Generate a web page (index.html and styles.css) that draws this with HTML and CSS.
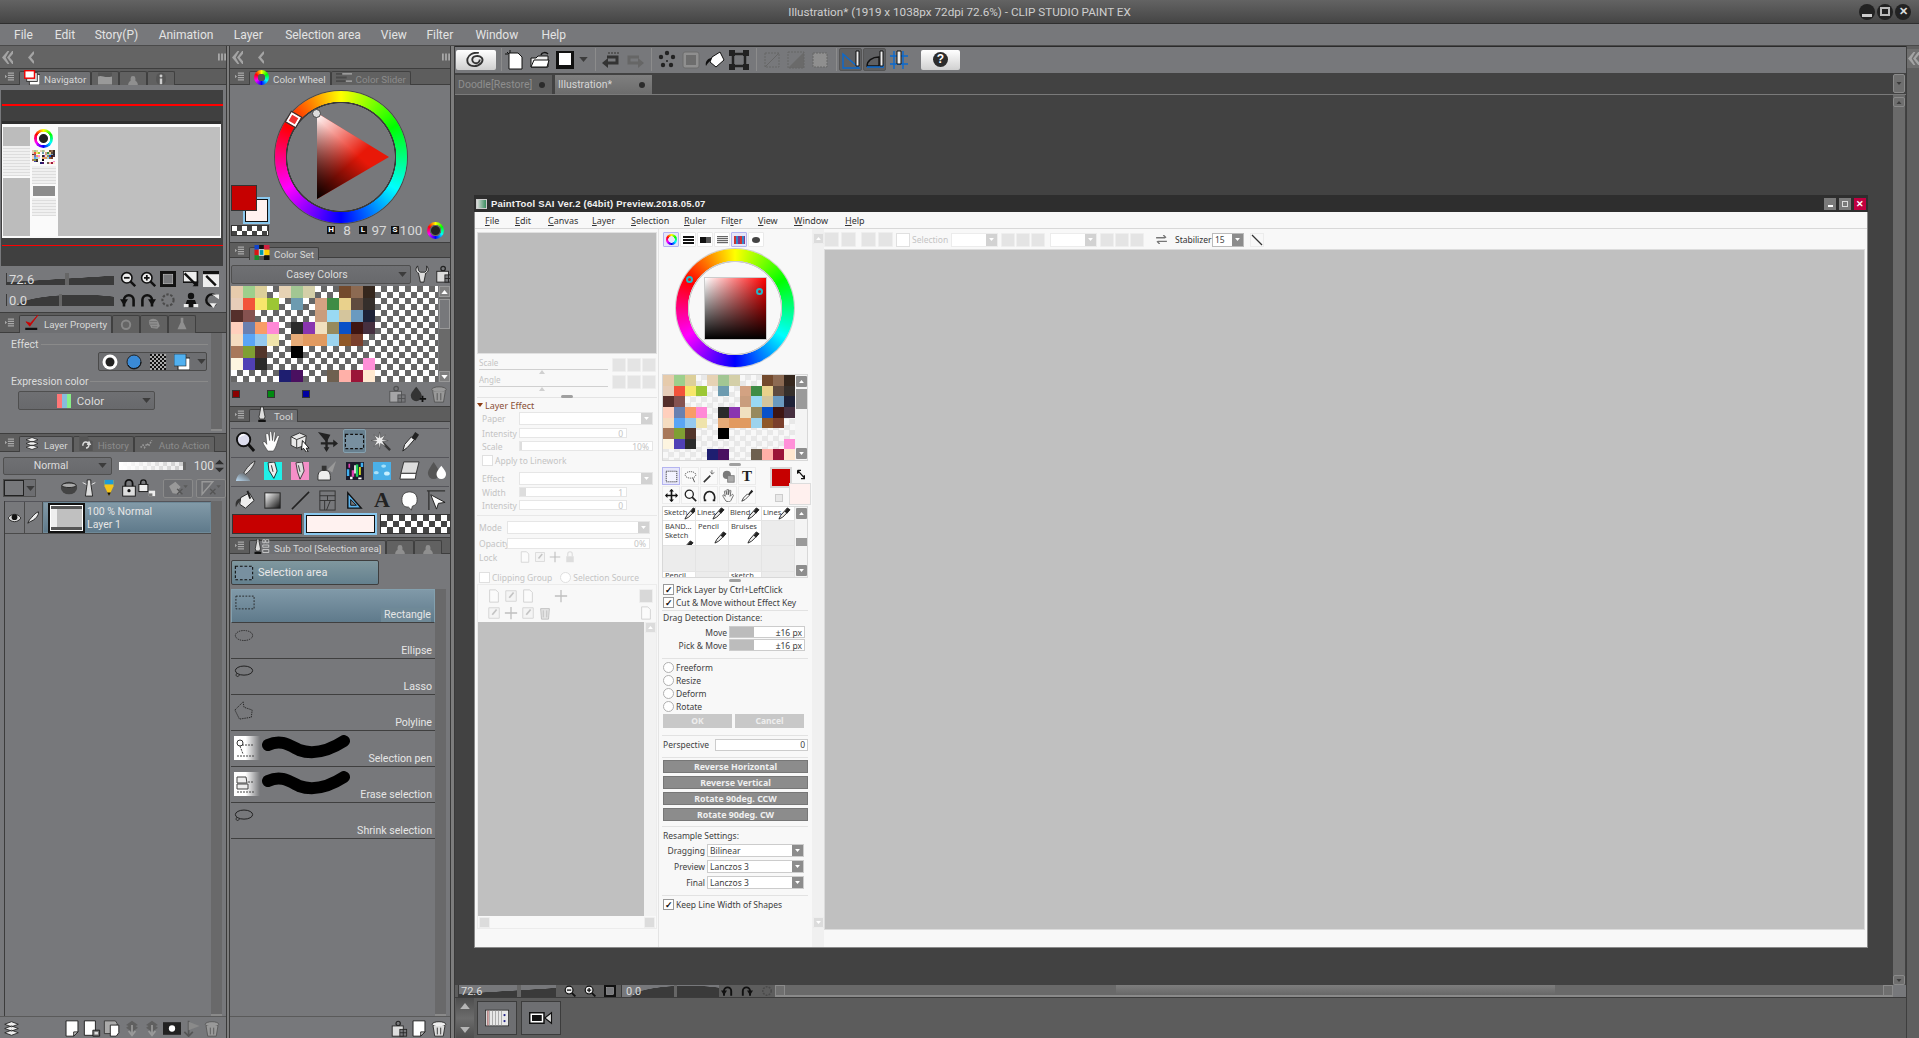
FILE: index.html
```html
<!DOCTYPE html>
<html lang="en">
<head>
<meta charset="utf-8">
<title>Illustration - CLIP STUDIO PAINT EX</title>
<link rel="stylesheet" href="styles.css">
</head>
<body>
<svg class="sprite" aria-hidden="true">
  <defs>
    <linearGradient id="triW" x1="0" y1="0" x2="0.45" y2="0.6"><stop offset="0" stop-color="#fff"/><stop offset="1" stop-color="#fff" stop-opacity="0"/></linearGradient>
    <linearGradient id="triK" x1="0" y1="1" x2="0.45" y2="0.4"><stop offset="0" stop-color="#000"/><stop offset="1" stop-color="#000" stop-opacity="0"/></linearGradient>
    <linearGradient id="fade" x1="0" y1="0" x2="1" y2="0"><stop offset="0.45" stop-color="#fff"/><stop offset="1" stop-color="#fff" stop-opacity="0"/></linearGradient>
    <linearGradient id="sq" x1="0" y1="0" x2="1" y2="1"><stop offset="0" stop-color="#fff"/><stop offset="1" stop-color="#111"/></linearGradient>
    <linearGradient id="brushg" x1="0" y1="1" x2="1" y2="0"><stop offset="0" stop-color="#bcdcf5"/><stop offset="1" stop-color="#555"/></linearGradient>
  </defs>
  <symbol id="menu" viewBox="0 0 11 10"><path fill="#a8a8a8" d="M0 3l2.500 2L0 7zM3.500 0H11v1.600H3.500zM3.500 2.800H11v1.600H3.500zM3.500 5.600H11v1.600H3.500zM3.500 8.400H11V10H3.500z"/></symbol>
  <symbol id="chev2" viewBox="0 0 12 14"><path fill="#a4a4a4" d="M6 0 0 7l6 7h2L4 7l4-7zM11 0 5.500 7l5.500 7h1V11L8.500 7 12 3V0z"/></symbol>
  <symbol id="chev1" viewBox="0 0 7 14"><path fill="#a4a4a4" d="M6 0 0 7l6 7h1V11L3.500 7 7 3V0z"/></symbol>
  <symbol id="grip" viewBox="0 0 9 8"><path fill="#a8a8a8" d="M0 0h2v8H0zM3.500 0h2v8h-2zM7 0h2v8H7z"/></symbol>
  <symbol id="magm" viewBox="0 0 20 20"><circle cx="8.500" cy="8.500" r="6.500" fill="#eee" stroke="#111" stroke-width="2"/><path d="M13 13l6 6" stroke="#111" stroke-width="3"/><path d="M5 8.500h7" stroke="#111" stroke-width="2.200"/></symbol>
  <symbol id="magp" viewBox="0 0 20 20"><circle cx="8.500" cy="8.500" r="6.500" fill="#eee" stroke="#111" stroke-width="2"/><path d="M13 13l6 6" stroke="#111" stroke-width="3"/><path d="M5 8.500h7M8.500 5v7" stroke="#111" stroke-width="2.200"/></symbol>
  <symbol id="fit" viewBox="0 0 20 20"><rect width="20" height="20" fill="#111"/><rect x="4" y="4" width="12" height="12" fill="#77787b" stroke="#ddd" stroke-width=".6"/></symbol>
  <symbol id="flip1" viewBox="0 0 20 20"><rect width="18" height="14" fill="#eee" stroke="#111" stroke-width="2"/><path d="M2 3l15 15" stroke="#111" stroke-width="3"/><path d="M12 19h7v-7z" fill="#111"/></symbol>
  <symbol id="flip2" viewBox="0 0 20 20"><rect y="2" width="20" height="18" fill="#eee"/><rect width="20" height="4" fill="#111"/><path d="M4 6l12 12" stroke="#111" stroke-width="3"/></symbol>
  <symbol id="rotl" viewBox="0 0 20 20"><path d="M5 18V10a6 6 0 0 1 12 0v8" fill="none" stroke="#111" stroke-width="3.200"/><path d="M0 9h10L5 17z" fill="#111"/></symbol>
  <symbol id="rotr" viewBox="0 0 20 20"><path d="M3 18V10a6 6 0 0 1 12 0v8" fill="none" stroke="#111" stroke-width="3.200"/><path d="M10 9h10l-5 8z" fill="#111"/></symbol>
  <symbol id="gear" viewBox="0 0 20 20"><circle cx="10" cy="10" r="7" fill="none" stroke="#4a4a4a" stroke-width="2.600" stroke-dasharray="3 2"/></symbol>
  <symbol id="person" viewBox="0 0 20 20"><circle cx="10" cy="5" r="4" fill="#111"/><path d="M5 10h10l3 9H2z" fill="#111"/><path d="M1 15h6v4H1zM13 15h6v4h-6z" fill="#eee"/></symbol>
  <symbol id="rot3" viewBox="0 0 20 20"><path d="M16 5A7 7 0 1 0 16 15" fill="none" stroke="#111" stroke-width="3"/><path d="M11 3h9v6zM8 14h9l-4 6z" fill="#eee"/></symbol>
  <symbol id="check" viewBox="0 0 20 20"><path d="M1 17h16v3H1z" fill="#111"/><path d="M2 9l5 6L18 0 8 11z" fill="#c00" stroke="#c00"/></symbol>
  <symbol id="dial" viewBox="0 0 20 20"><circle cx="10" cy="12" r="8" fill="#888"/><circle cx="10" cy="12" r="5" fill="#666"/></symbol>
  <symbol id="cloth" viewBox="0 0 20 20"><path d="M2 6c4-5 10-4 14 0l3 8-4 4-9-1-3-6z" fill="#8f8f8f"/><path d="M3 7h12M4 11h11M7 15h8" stroke="#666"/></symbol>
  <symbol id="flask" viewBox="0 0 20 20"><path d="M8 1h4v7l5 11H3l5-11z" fill="#8f8f8f"/></symbol>
  <symbol id="layers" viewBox="0 0 20 20"><path d="M2 5l8-3 8 3-8 3zM2 10l8-3 8 3-8 3zM2 15l8-3 8 3-8 3z" fill="#eee" stroke="#222" stroke-width="1"/></symbol>
  <symbol id="history" viewBox="0 0 20 20"><path d="M1 0h11l2 5 5 2v13H1z" fill="#555"/><path d="M6 13a4 4 0 1 1 4 3" fill="none" stroke="#ddd" stroke-width="2"/><path d="M14 6l3 6h-6z" fill="#ddd"/></symbol>
  <symbol id="autoa" viewBox="0 0 20 14"><path d="M2 12l3-3 2 3 3-5 2 3 4-7" fill="none" stroke="#999" stroke-width="2" stroke-dasharray="2 1.500"/></symbol>
  <symbol id="img" viewBox="0 0 14 12"><rect width="14" height="12" fill="#555"/><path d="M0 4c4-2 6 2 14 0v8H0z" fill="#999"/></symbol>
  <symbol id="tube" viewBox="0 0 14 16"><path d="M1 16a6 6 0 0 1 12 0zM4 8a3 3 0 0 1 6 0v3H4z" fill="#8f8f8f"/></symbol>
  <symbol id="info" viewBox="0 0 14 16"><rect x="1" y="1" width="12" height="15" rx="6" fill="#555"/><circle cx="7" cy="5" r="1.800" fill="#ccc"/><path d="M5.500 8h3v7h-3z" fill="#ccc"/></symbol>
  <symbol id="navi" viewBox="0 0 18 17"><rect x="6" y="5" width="12" height="12" fill="#fff" stroke="#333"/><rect x="3" y="3" width="12" height="10" fill="#ddd" stroke="#333"/><rect x=".8" y=".8" width="11" height="8.500" fill="#fff" stroke="#e00" stroke-width="1.600"/></symbol>
  <symbol id="cset" viewBox="0 0 16 16"><path fill="#1144cc" d="M0 0h5v5H0z"/><path fill="#111" d="M5 0h5v5H5z"/><path fill="#d02040" d="M10 0h6v5h-6z"/><path fill="#d81515" d="M0 5h5v6H0z"/><path fill="#09a" d="M5 5h5v6H5z"/><path fill="#ffd000" d="M10 5h6v6h-6z"/><path fill="#1a8a2a" d="M0 11h5v5H0z"/><path fill="#555" d="M5 11h5v5H5z"/><path fill="#111" d="M10 11h6v5h-6z"/><rect x="5" y="5" width="5" height="6" fill="none" stroke="#fff" stroke-width=".8"/></symbol>
  <symbol id="slid" viewBox="0 0 18 12"><path fill="#4a4a4a" d="M0 1h18v2H0zM0 5h12v2H0zM0 9h18v2H0z"/><path fill="#9a9a9a" d="M7 1h11v2H7zM11 9h7v2h-7z"/></symbol>
  <symbol id="penstand" viewBox="0 0 12 20"><path d="M4 0h4v3l2 10-1 3H3l-1-3 2-10z" fill="#ddd" stroke="#222"/><path d="M1 17h10v3H1z" fill="#111"/></symbol>
  <symbol id="subt" viewBox="0 0 20 20"><path d="M3 0h3v3l2 10-1 3H2l-1-3 2-10z" fill="#ddd" stroke="#222"/><path d="M0 17h9v3H0z" fill="#111"/><path d="M11 1h3v4h-3zM15 1h4v4h-4zM11 8h8v3h-8zM11 14h8v4h-8z" fill="none" stroke="#ddd"/></symbol>
  <symbol id="wrench" viewBox="0 0 20 20"><path d="M4 1c-3 3-2 7 1 8l2 10h4l2-10c3-1 4-5 1-8v5l-2 2H7L5 6z" fill="#ddd" stroke="#222"/></symbol>
  <symbol id="bag" viewBox="0 0 20 20"><circle cx="9" cy="4" r="2.500" fill="none" stroke="#222" stroke-width="1.400"/><rect x="2" y="7" width="13" height="12" fill="#ddd" stroke="#222"/><rect x="11" y="11" width="8" height="8" fill="#77787b" stroke="#222"/><path d="M11 15h8M15 11v8" stroke="#222"/></symbol>
  <symbol id="dropplus" viewBox="0 0 20 20"><path d="M8 2c5 6 6 8 6 10a6 6 0 1 1-12 0c0-2 1-4 6-10z" fill="#333"/><path d="M15 12v7M12 15.500h7" stroke="#111" stroke-width="2"/></symbol>
  <symbol id="trash" viewBox="0 0 20 20"><ellipse cx="10" cy="5" rx="8" ry="3" fill="#eee" stroke="#222"/><path d="M3 7l2 12h10l2-12" fill="#ddd" stroke="#222"/><path d="M8 9v8M12 9v8" stroke="#222"/></symbol>
  <symbol id="trashd" viewBox="0 0 20 20"><ellipse cx="10" cy="5" rx="8" ry="3" fill="#999" stroke="#555"/><path d="M3 7l2 12h10l2-12" fill="#999" stroke="#555"/><path d="M8 9v8M12 9v8" stroke="#555"/></symbol>
  <symbol id="page" viewBox="0 0 18 20"><path d="M2 1h14v13l-5 5H2z" fill="#fff" stroke="#111"/><path d="M11 19v-5h5z" fill="#ccc" stroke="#111"/></symbol>
  <symbol id="pagecopy" viewBox="0 0 20 20"><path d="M1 1h13v17H1z" fill="#fff" stroke="#111"/><path d="M11 12h8v7h-8z" fill="#777" stroke="#111"/><path d="M13 14h4v3h-4z" fill="#ddd"/></symbol>
  <symbol id="pagefold" viewBox="0 0 20 20"><path d="M1 1h13l2 3v12H1z" fill="#aaa" stroke="#333"/><path d="M8 6h10v9l-3 4H8z" fill="#fff" stroke="#111"/></symbol>
  <symbol id="merge" viewBox="0 0 20 20"><path d="M10 1l7 5-3 1 3 2-7 5-7-5 3-2-3-1z" fill="#5f5f5f"/><path d="M10 6v10M6 13l4 5 4-5" stroke="#9a9a9a" stroke-width="2" fill="none"/></symbol>
  <symbol id="maskb" viewBox="0 0 20 14"><rect width="20" height="14" fill="#222"/><circle cx="10" cy="7" r="3.500" fill="#fff"/></symbol>
  <symbol id="flag" viewBox="0 0 20 20"><path d="M6 1v18M1 14l5 5 5-5" stroke="#555" stroke-width="2" fill="none"/><path d="M6 2l13 5-13 5z" fill="#8a8a8a"/></symbol>
  <symbol id="eye" viewBox="0 0 16 12"><path d="M0 6c4-6 12-6 16 0-4 6-12 6-16 0z" fill="#ddd" stroke="#111"/><circle cx="8" cy="5" r="3.500" fill="#111"/></symbol>
  <symbol id="pen" viewBox="0 0 16 16"><path d="M14 1c1 4-4 10-10 12L1 15l2-4C6 8 10 2 14 1z" fill="#eee" stroke="#111"/></symbol>
  <symbol id="clip" viewBox="0 0 20 16"><ellipse cx="10" cy="8" rx="9" ry="7" fill="#444"/><ellipse cx="10" cy="5" rx="8" ry="2.500" fill="#aaa" stroke="#222"/></symbol>
  <symbol id="lhouse" viewBox="0 0 14 20"><path d="M5 1h4v4l2 14H3L5 5z" fill="#ddd" stroke="#222"/><path d="M0 4l4 2M14 4l-4 2" stroke="#eee"/></symbol>
  <symbol id="pencolor" viewBox="0 0 12 20"><path d="M1 1h10v7L6 19 1 8z" fill="#f5c518"/><path d="M1 1h10v5H1z" fill="#1e9ad6"/><path d="M4 15l2 4 2-4z" fill="#111"/></symbol>
  <symbol id="lock" viewBox="0 0 16 20"><path d="M4 9V5a4 4 0 0 1 8 0v4" fill="none" stroke="#111" stroke-width="2"/><rect x="1" y="8" width="14" height="11" fill="#ddd" stroke="#111"/><circle cx="8" cy="13" r="1.800" fill="#111"/></symbol>
  <symbol id="locka" viewBox="0 0 20 20"><path d="M3 6V4a3 3 0 0 1 6 0v2" fill="none" stroke="#111" stroke-width="1.500"/><rect x="1" y="6" width="10" height="8" fill="#eee" stroke="#111"/><path d="M12 13h7v6h-7z" fill="#eee"/><path d="M12 16h4v3h-4z" fill="#777"/></symbol>
  <symbol id="pickx" viewBox="0 0 24 18"><path d="M2 7l7-5 6 6-3 3 2 5-8-1z" fill="#999"/><path d="M11 10l6 6M17 10l-6 6" stroke="#555" stroke-width="1.500"/><path d="M18 6h5l-2.500 3z" fill="#5a5a5a"/></symbol>
  <symbol id="lnx" viewBox="0 0 24 18"><path d="M2 2h12L2 16z" fill="none" stroke="#999" stroke-width="1.600"/><path d="M2 16L14 2" stroke="#999"/><path d="M11 10l6 6M17 10l-6 6" stroke="#555" stroke-width="1.500"/><path d="M18 6h5l-2.500 3z" fill="#5a5a5a"/></symbol>
  <symbol id="dotring" viewBox="0 0 16 16"><circle cx="8" cy="8" r="7.500" fill="#fff"/><circle cx="8" cy="8" r="4.500" fill="#222"/></symbol>
  <symbol id="bluec" viewBox="0 0 16 16"><circle cx="8" cy="8" r="7" fill="#3a8ad6" stroke="#222"/><path d="M2 11a7 7 0 0 0 13-3" stroke="#111" fill="none"/></symbol>
  <symbol id="noisec" viewBox="0 0 16 16"><rect width="16" height="16" fill="#aaa"/><path d="M0 0h2v2H0zM4 0h2v2H4zM8 0h2v2H8zM12 0h2v2h-2zM2 2h2v2H2zM6 2h2v2H6zM10 2h2v2h-2zM14 2h2v2h-2zM0 4h2v2H0zM4 4h2v2H4zM8 4h2v2H8zM12 4h2v2h-2zM2 6h2v2H2zM6 6h2v2H6zM10 6h2v2h-2zM14 6h2v2h-2zM0 8h2v2H0zM4 8h2v2H4zM8 8h2v2H8zM12 8h2v2h-2zM2 10h2v2H2zM6 10h2v2H6zM10 10h2v2h-2zM14 10h2v2h-2zM0 12h2v2H0zM4 12h2v2H4zM8 12h2v2H8zM12 12h2v2h-2zM2 14h2v2H2zM6 14h2v2H6zM10 14h2v2h-2zM14 14h2v2h-2z" fill="#111"/></symbol>
  <symbol id="blues" viewBox="0 0 16 16"><rect x="4" y="4" width="12" height="12" fill="#fff" stroke="#222"/><rect width="12" height="12" fill="#50b0f0" stroke="#222" stroke-width=".6"/></symbol>
  <symbol id="rgb" viewBox="0 0 14 14"><path fill="#f77" d="M0 0h5v14H0z"/><path fill="#8bd" d="M5 0h5v14H5z"/><path fill="#8e8" d="M10 0h4v14h-4z"/></symbol>
  <symbol id="t-mag" viewBox="0 0 22 22"><circle cx="9" cy="9" r="7" fill="#dde" stroke="#111" stroke-width="2"/><path d="M5 6a5 5 0 0 1 5-2" stroke="#fff" stroke-width="1.500" fill="none"/><path d="M14 14l6 7" stroke="#111" stroke-width="3"/></symbol>
  <symbol id="t-hand" viewBox="0 0 22 22"><path d="M6 21c-2-4-5-7-5-9 1-2 3 0 4 2L4 4c0-2 2-2 3 0l1 6V1c0-1 2-1 2 0l1 9 1-8c0-2 2-1 2 0l-1 9 3-6c1-1 3 0 2 1l-3 9c-1 3-2 4-3 6z" fill="#fff" stroke="#333" stroke-width=".6"/></symbol>
  <symbol id="t-box" viewBox="0 0 22 22"><path d="M1 6l9-4 7 3-1 10-9 3-6-3z" fill="#e8e8e8" stroke="#333"/><path d="M1 6l6 3v9M7 9l10-4" fill="none" stroke="#333"/><path d="M13 10l7 8-3 0 2 4-2 0-3-4-2 2z" fill="#fff" stroke="#111"/></symbol>
  <symbol id="t-move" viewBox="0 0 22 22"><path d="M10 5v15M4 13h16" stroke="#222" stroke-width="2.500"/><path d="M10 12 1 1l13 3z" fill="#222"/><path d="M17 9l5 4-5 4zM7 17l3 5 3-5z" fill="#222"/></symbol>
  <symbol id="t-sel" viewBox="0 0 22 22"><rect x="1.500" y="3.500" width="19" height="15" fill="#7890a0" stroke="#111" stroke-width="1.200" stroke-dasharray="3 2"/></symbol>
  <symbol id="t-wand" viewBox="0 0 22 22"><path d="M10 10l10 10" stroke="#333" stroke-width="2.500"/><path d="M9 1l1 6 5-3-3 5 6 1-6 1 3 5-5-3-1 6-1-6-5 3 3-5-6-1 6-1-3-5 5 3z" fill="#eee" stroke="#444" stroke-width=".5"/></symbol>
  <symbol id="t-drop" viewBox="0 0 22 22"><path d="M4 21l2-7 7-8 3 3-7 8z" fill="#eee" stroke="#222"/><path d="M13 7l4-6 4 3-4 6z" fill="#222"/></symbol>
  <symbol id="t-brush" viewBox="0 0 22 22"><path d="M9 14c3-6 8-11 12-13-1 5-5 10-10 14z" fill="#ddd" stroke="#333"/><path d="M1 22c1-6 4-9 8-8 2 2 5 4 7 8z" fill="url(#brushg)"/></symbol>
  <symbol id="t-penc" viewBox="0 0 22 22"><rect width="22" height="22" fill="#1ff0e8"/><path d="M5 1l8-1 3 11-4 9-6-10z" fill="#eee" stroke="#111"/><path d="M9 4l2 8" stroke="#111"/></symbol>
  <symbol id="t-penp" viewBox="0 0 22 22"><rect width="22" height="22" fill="#f58fc8"/><path d="M6 1l8-1 2 11-5 10-3-9z" fill="#ddd" stroke="#222"/><path d="M9 4l2 8" stroke="#222"/></symbol>
  <symbol id="t-ink" viewBox="0 0 22 22"><path d="M1 18c0-5 2-7 5-7h3c3 0 5 2 5 7v3H1z" fill="#eee" stroke="#333"/><path d="M5 6h5v5H5z" fill="#333"/><path d="M11 10l9-9-4 12z" fill="#999"/></symbol>
  <symbol id="t-noise" viewBox="0 0 22 22"><rect width="22" height="22" fill="#1a1a2a"/><path fill="#1ad05a" d="M12 3h3v15h-3z"/><path fill="#ecec20" d="M16 6h2v10h-2z"/><path fill="#e040b0" d="M3 2h2v5H3zM7 10h3v8H7z"/><path fill="#40b0f0" d="M1 9h3v8H1zM18 1h3v5h-3z"/><path fill="#fff" d="M10 4h2v10h-2zM5 18h3v3H5zM15 19h4v2h-4z"/></symbol>
  <symbol id="t-sky" viewBox="0 0 22 22"><rect width="22" height="22" fill="#4ab0e8"/><ellipse cx="13" cy="5" rx="3" ry="2" fill="#a8e0f8"/><ellipse cx="4" cy="13" rx="3" ry="2" fill="#a8e0f8"/><ellipse cx="17" cy="14" rx="3.500" ry="2.500" fill="#c8f0ff"/></symbol>
  <symbol id="t-erase" viewBox="0 0 22 22"><path d="M5 2h16l-3 12H2z" fill="#ddd" stroke="#333"/><path d="M2 14h16l-1 6H1z" fill="#fff" stroke="#333"/></symbol>
  <symbol id="t-blend" viewBox="0 0 22 22"><path d="M8 2c4 6 6 9 6 12a6 6 0 0 1-12 0c0-3 2-6 6-12z" fill="#555"/><path d="M16 6c3 4 5 6 5 9a5 5 0 1 1-10 0c0-3 2-5 5-9z" fill="#fff"/></symbol>
  <symbol id="t-fill" viewBox="0 0 22 22"><path d="M6 8L15 3l5 8-9 8-6-4z" fill="#eee" stroke="#222"/><path d="M5 9C1 10 0 14 1 18c1-2 3-5 5-7z" fill="#333"/><path d="M13 1l3 8" stroke="#222" stroke-width="2"/></symbol>
  <symbol id="t-grad" viewBox="0 0 22 22"><rect x="3" y="3" width="16" height="16" fill="url(#sq)" stroke="#222"/></symbol>
  <symbol id="t-line" viewBox="0 0 22 22"><path d="M2 20L20 2" stroke="#222" stroke-width="1.600"/></symbol>
  <symbol id="t-frame" viewBox="0 0 22 22"><rect x="3" y="1" width="16" height="20" fill="none" stroke="#333"/><path d="M3 6h16M3 11h16M11 6v5M8 11v10M14 11l-4 10" stroke="#333"/></symbol>
  <symbol id="t-rule" viewBox="0 0 22 22"><path d="M4 3v16h14z" fill="#5ab4f0" stroke="#111" stroke-width="1.500"/><path d="M7 10v6h6z" fill="#77787b" stroke="#111"/></symbol>
  <symbol id="t-ball" viewBox="0 0 22 22"><path d="M3 10C3 4 7 2 11 2s8 2 8 8-3 6-5 7l-1 4-3-3c-5 0-7-3-7-8z" fill="#fff" stroke="#444"/></symbol>
  <symbol id="t-arrow" viewBox="0 0 22 22"><path d="M1 1h19M3 1v20" stroke="#333" stroke-width="1.400"/><path d="M5 5l15 8-7 1-2 6z" fill="#fff" stroke="#222"/></symbol>
  <symbol id="lasso" viewBox="0 0 22 16"><ellipse cx="11" cy="7" rx="9.500" ry="5" fill="none" stroke="#222" stroke-width="1.100"/><path d="M3 10c-2 3 1 5 3 2" fill="none" stroke="#222"/></symbol>
  <symbol id="ellip" viewBox="0 0 22 16"><ellipse cx="11" cy="8" rx="9.500" ry="5.500" fill="none" stroke="#222" stroke-dasharray="1.500 1"/></symbol>
  <symbol id="poly" viewBox="0 0 22 22"><path d="M1 11 10 2l1 6 9 3-1 8-13 2z" fill="none" stroke="#222" stroke-dasharray="1.500 1"/></symbol>
  <symbol id="rect" viewBox="0 0 22 16"><rect x="1" y="1" width="20" height="14" fill="none" stroke="#222" stroke-dasharray="2 1.500"/></symbol>
  <symbol id="wave" viewBox="0 0 96 24"><path d="M11 10C24 4 32 10 42 15c14 5 28 2 45-9" fill="none" stroke="#000" stroke-width="12" stroke-linecap="round"/></symbol>
  <symbol id="fuzz" viewBox="0 0 26 24"><rect width="26" height="24" fill="url(#fade)"/><circle cx="6" cy="7" r="3" fill="none" stroke="#333"/><path d="M6 10l3 8M8 9h11M3 20h17" stroke="#444" stroke-dasharray="2 1"/></symbol>
  <symbol id="fuzze" viewBox="0 0 26 24"><rect width="26" height="24" fill="url(#fade)"/><path d="M3 5h9l1 6H3zM3 12h11v5H3z" fill="#eee" stroke="#444"/><path d="M14 10h6M3 20h17" stroke="#444" stroke-dasharray="2 1"/></symbol>
  <symbol id="logo" viewBox="0 0 20 16"><path d="M14 8a4 4 0 0 1-8 0c0-4 7-5 10-2 3 4-2 9-8 9S0 11 1 7C2 3 7 0 13 1" fill="none" stroke="#333" stroke-width="2"/></symbol>
  <symbol id="newp" viewBox="0 0 20 20"><path d="M4 3h9l4 4v12H4z" fill="#fff" stroke="#111"/><path d="M2 2l2 2M5 0v3M0 4h3" stroke="#111"/></symbol>
  <symbol id="folder" viewBox="0 0 20 20"><path d="M1 8h5l2-2h10v11H1z" fill="#eee" stroke="#111"/><path d="M1 17L4 10h15l-2 7z" fill="#fff" stroke="#111"/><path d="M11 5c1-3 5-3 7-1" fill="none" stroke="#111" stroke-width="1.500"/></symbol>
  <symbol id="save" viewBox="0 0 20 20"><rect x="1" y="1" width="18" height="18" fill="#111"/><rect x="4" y="3" width="12" height="12" fill="#fff"/></symbol>
  <symbol id="undo" viewBox="0 0 20 16"><path d="M6 5h10v6H4" fill="none" stroke="#333" stroke-width="3"/><path d="M7 6L1 11l6 5z" fill="#333"/><path d="M7 1h11" stroke="#555" stroke-width="2" stroke-dasharray="2 1"/></symbol>
  <symbol id="redo" viewBox="0 0 20 16"><path d="M14 5H4v6h12" fill="none" stroke="#666" stroke-width="3"/><path d="M13 6l6 5-6 5z" fill="#666"/></symbol>
  <symbol id="dots" viewBox="0 0 20 20"><g fill="#222"><circle cx="10" cy="3" r="2.200"/><circle cx="4" cy="7" r="2.200"/><circle cx="16" cy="7" r="2.200"/><circle cx="6" cy="15" r="2.200"/><circle cx="14" cy="15" r="2.200"/><circle cx="10" cy="11" r="1"/></g></symbol>
  <symbol id="chipd" viewBox="0 0 20 20"><rect x="2" y="2" width="16" height="16" rx="2" fill="#8f8f8f" stroke="#6c6c6c"/><rect x="5" y="5" width="10" height="10" fill="#6d6d6d"/></symbol>
  <symbol id="bucket" viewBox="0 0 20 20"><path d="M7 7l8-5 4 8-8 7-6-5z" fill="#fff" stroke="#111"/><path d="M6 8C2 9 0 12 1 16c1-2 3-4 5-6z" fill="#111"/></symbol>
  <symbol id="trans" viewBox="0 0 20 20"><rect x="4" y="4" width="12" height="12" fill="none" stroke="#222" stroke-width="2.500"/><g fill="#222"><rect x="0" y="0" width="6" height="6"/><rect x="14" y="0" width="6" height="6"/><rect x="0" y="14" width="6" height="6"/><rect x="14" y="14" width="6" height="6"/></g></symbol>
  <symbol id="dis1" viewBox="0 0 20 20"><rect x="3" y="3" width="14" height="14" fill="none" stroke="#666" stroke-dasharray="2 1"/><path d="M3 17L17 3" stroke="#666"/></symbol>
  <symbol id="dis2" viewBox="0 0 20 20"><path d="M2 18h16V2z" fill="#6a6a6a"/><rect x="2" y="2" width="16" height="16" fill="none" stroke="#666" stroke-dasharray="2 1"/></symbol>
  <symbol id="dis3" viewBox="0 0 20 20"><rect x="3" y="3" width="14" height="14" fill="#8f8f8f" stroke="#666" stroke-dasharray="2 1"/></symbol>
  <symbol id="ruler1" viewBox="0 0 20 20"><path d="M2 4v14h16z" fill="none" stroke="#0a6ad0" stroke-width="1.400"/><path d="M15 1h3v15h-3z" fill="#eee" stroke="#111"/></symbol>
  <symbol id="ruler2" viewBox="0 0 20 20"><path d="M2 16c0-5 5-9 12-9v9z" fill="none" stroke="#111" stroke-width="1.300"/><path d="M2 17h16M18 14v4" stroke="#0a6ad0" stroke-width="1.400"/><path d="M15 1h3v15h-3z" fill="#eee" stroke="#111"/></symbol>
  <symbol id="ruler3" viewBox="0 0 20 20"><path d="M5 1v18M14 1v18M1 6h18M1 14h18" stroke="#0a6ad0" stroke-width="1.400"/><path d="M8 1h4v13H8z" fill="#eee" stroke="#111"/></symbol>
  <symbol id="timel" viewBox="0 0 32 22"><rect x=".5" y=".5" width="31" height="21" fill="#e8e8e8" stroke="#222"/><path d="M3 1v20M6 1v20M10 1v20M14 1v20M18 1v20M22 1v20" stroke="#9a9a9a"/><path d="M4 1v20" stroke="#a33"/><circle cx="26" cy="7" r="1.500" fill="#22228a"/><circle cx="26" cy="15" r="1.500" fill="#22228a"/></symbol>
  <symbol id="camera" viewBox="0 0 32 22"><rect x="1" y="4" width="19" height="14" fill="#fff" stroke="#111" stroke-width="2"/><rect x="4" y="7" width="13" height="8" fill="#111"/><path d="M21 11l9-7v14z" fill="#ddd" stroke="#111" stroke-width="1.500"/></symbol>
  <symbol id="updown" viewBox="0 0 10 14"><path d="M5 0l5 5H0zM5 14l5-5H0z" fill="#2e2e2e"/></symbol>
  <symbol id="caret" viewBox="0 0 10 6"><path d="M0 0h10L5 6z" fill="#3c3c3c"/></symbol>
  <symbol id="fadecaret" viewBox="0 0 8 5"><path d="M0 0h8L4 5z" fill="#fff"/></symbol>
  <symbol id="upcaret" viewBox="0 0 8 5"><path d="M0 5h8L4 0z" fill="#fff"/></symbol>
  <symbol id="gh-page" viewBox="0 0 16 16"><path d="M3 1h7l3 3v11H3z" fill="#fbfbfb" stroke="#cfcfcf"/></symbol>
  <symbol id="gh-pen" viewBox="0 0 16 16"><path d="M2 2h12v12H2z" fill="#f4f4f4" stroke="#d4d4d4"/><path d="M6 10l5-6" stroke="#c4c4c4" stroke-width="2"/></symbol>
  <symbol id="gh-bin" viewBox="0 0 16 16"><path d="M3 3h10l-1 12H4z" fill="#e4e4e4" stroke="#bdbdbd"/><path d="M6 5v8M10 5v8" stroke="#bdbdbd"/></symbol>
  <symbol id="gh-mv" viewBox="0 0 16 16"><path d="M8 1v14M1 8h14" stroke="#bfbfbf" stroke-width="1.500"/></symbol>
  <symbol id="gh-lk" viewBox="0 0 16 16"><rect x="3" y="7" width="10" height="8" fill="#ddd"/><path d="M5 7V4a3 3 0 0 1 6 0v3" fill="none" stroke="#ddd" stroke-width="1.500"/></symbol>
  <symbol id="s-sel" viewBox="0 0 16 16"><rect x="1.500" y="1.500" width="13" height="13" fill="#f4f4ff" stroke="#222" stroke-dasharray="1.500 1"/></symbol>
  <symbol id="s-las" viewBox="0 0 16 16"><ellipse cx="8" cy="6" rx="6.500" ry="4" fill="none" stroke="#333" stroke-dasharray="1.500 1"/><path d="M11 10l2 5" stroke="#333"/></symbol>
  <symbol id="s-wand" viewBox="0 0 16 16"><path d="M1 15L9 7" stroke="#333" stroke-width="2"/><path d="M11 0v5M14 3l-3 2M9 2l2 3" stroke="#666"/></symbol>
  <symbol id="s-shape" viewBox="0 0 16 16"><circle cx="6" cy="6" r="5" fill="#7a7a7a"/><rect x="7" y="7" width="8" height="8" fill="#aaa" stroke="#777"/></symbol>
  <symbol id="s-move" viewBox="0 0 16 16"><path d="M8 1v14M1 8h14" stroke="#111" stroke-width="2"/><path d="M8 0l3 3H5zM8 16l3-3H5zM0 8l3-3v6zM16 8l-3-3v6z" fill="#111"/></symbol>
  <symbol id="s-mag" viewBox="0 0 16 16"><circle cx="6.500" cy="6.500" r="5" fill="none" stroke="#222" stroke-width="1.600"/><path d="M10 10l5 5" stroke="#222" stroke-width="2"/></symbol>
  <symbol id="s-rot" viewBox="0 0 16 16"><path d="M4 14H2v-1c-1-3 0-10 6-10s7 7 6 10v1h-2" fill="none" stroke="#222" stroke-width="2"/></symbol>
  <symbol id="s-hand" viewBox="0 0 16 16"><path d="M5 15C3 12 1 9 1 8s2-1 3 1L3 3c0-1 2-1 2 0l1 4V1c0-1 2-1 2 0v6l1-5c0-1 2 0 2 0l-1 7 2-2c1-1 2 0 2 1l-3 6-2 2z" fill="#f7f7f7" stroke="#555"/></symbol>
  <symbol id="s-drop" viewBox="0 0 16 16"><path d="M1 15l2-4 5-5 2 2-5 5z" fill="#fff" stroke="#222"/><path d="M9 6l4-5 2 2-5 5z" fill="#222"/></symbol>
  <symbol id="s-pen" viewBox="0 0 14 14"><path d="M1 13l2-4 7-8 3 2-8 8z" fill="#eee" stroke="#222"/><path d="M10 1l3 2-3 4-3-2z" fill="#222"/></symbol>
  <symbol id="swapa" viewBox="0 0 12 12"><path d="M2 1l8 9M10 7v4H6M2 1v4M2 1h4" fill="none" stroke="#111" stroke-width="1.600"/></symbol>
  <symbol id="swap2" viewBox="0 0 12 10"><path d="M0 3h10M8 0l3 3M12 7H2M4 10L1 7" fill="none" stroke="#777" stroke-width="1.500"/></symbol>
  <symbol id="diag" viewBox="0 0 12 12"><path d="M1 1l10 10" stroke="#333" stroke-width="1.300"/></symbol>
  <symbol id="palette" viewBox="0 0 12 8" preserveAspectRatio="none">
    <g shape-rendering="crispEdges">
      <path fill="#e6cbac" d="M0 0h1v1H0z"/><path fill="#9dcf8c" d="M1 0h1v1H1z"/><path fill="#dccf99" d="M2 0h1v1H2z"/><path fill="#e6d2b4" d="M4 0h1v1H4z"/><path fill="#a2c693" d="M5 0h1v1H5z"/><path fill="#d4cfa8" d="M6 0h1v1H6z"/><path fill="#734a2d" d="M9 0h1v1H9z"/><path fill="#8c6a52" d="M10 0h1v1h-1z"/><path fill="#35271d" d="M11 0h1v1h-1z"/>
      <path fill="#e6cdb9" d="M0 1h1v1H0z"/><path fill="#f2533a" d="M1 1h1v1H1z"/><path fill="#f7e66b" d="M2 1h1v1H2z"/><path fill="#9cc734" d="M3 1h1v1H3z"/><path fill="#6d9bb0" d="M5 1h1v1H5z"/><path fill="#d3a282" d="M7 1h1v1H7z"/><path fill="#3f8c45" d="M8 1h1v1H8z"/><path fill="#e9d18c" d="M9 1h1v1H9z"/><path fill="#5f4b3f" d="M10 1h1v1h-1z"/><path fill="#352f2b" d="M11 1h1v1h-1z"/>
      <path fill="#552f2b" d="M0 2h1v1H0z"/><path fill="#855250" d="M1 2h1v1H1z"/><path fill="#c99d7d" d="M7 2h1v1H7z"/><path fill="#99d9f4" d="M8 2h1v1H8z"/><path fill="#d4c59c" d="M9 2h1v1H9z"/><path fill="#6a9ac0" d="M10 2h1v1h-1z"/><path fill="#1e2238" d="M11 2h1v1h-1z"/>
      <path fill="#ffcfbd" d="M0 3h1v1H0z"/><path fill="#6a80b0" d="M1 3h1v1H1z"/><path fill="#f89c66" d="M2 3h1v1H2z"/><path fill="#ff88d6" d="M3 3h1v1H3z"/><path fill="#2b2b2b" d="M5 3h1v1H5z"/><path fill="#8a35b0" d="M6 3h1v1H6z"/><path fill="#f0e0c0" d="M7 3h1v1H7z"/><path fill="#978a5d" d="M8 3h1v1H8z"/><path fill="#0851c8" d="M9 3h1v1H9z"/><path fill="#3e1512" d="M10 3h1v1h-1z"/><path fill="#463040" d="M11 3h1v1h-1z"/>
      <path fill="#f5dcc0" d="M0 4h1v1H0z"/><path fill="#5aa5f5" d="M1 4h1v1H1z"/><path fill="#95c9ee" d="M2 4h1v1H2z"/><path fill="#efe3ab" d="M3 4h1v1H3z"/><path fill="#e6ab78" d="M5 4h1v1H5z"/><path fill="#e29a60" d="M6 4h1v1H6z"/><path fill="#e09a60" d="M7 4h1v1H7z"/><path fill="#9cd3ed" d="M8 4h1v1H8z"/><path fill="#8f5828" d="M9 4h1v1H9z"/><path fill="#7a3f2c" d="M10 4h1v1h-1z"/>
      <path fill="#a8785a" d="M0 5h1v1H0z"/><path fill="#7f9f33" d="M1 5h1v1H1z"/><path fill="#52352a" d="M2 5h1v1H2z"/><path fill="#000" d="M5 5h1v1H5z"/>
      <path fill="#fdf5e0" d="M0 6h1v1H0z"/><path fill="#5040b5" d="M1 6h1v1H1z"/><path fill="#2b2b2b" d="M2 6h1v1H2z"/><path fill="#ff90d8" d="M11 6h1v1h-1z"/>
      <path fill="#1e1e70" d="M4 7h1v1H4z"/><path fill="#4a1060" d="M5 7h1v1H5z"/><path fill="#6e6050" d="M8 7h1v1H8z"/><path fill="#ffb0a8" d="M9 7h1v1H9z"/><path fill="#9b1538" d="M10 7h1v1h-1z"/><path fill="#ffe8d0" d="M11 7h1v1h-1z"/>
    </g>
  </symbol>
</svg>

<div class="app">
  <header class="titlebar">
    <span class="title-text">Illustration* (1919 x 1038px 72dpi 72.6%) - CLIP STUDIO PAINT EX</span>
    <div class="winbtns">
      <span class="winbtn"><b class="wb-min"></b></span>
      <span class="winbtn"><b class="wb-max"></b></span>
      <span class="winbtn wb-x">✕</span>
    </div>
  </header>
  <nav class="menubar">
    <span class="m mn1">File</span><span class="m mn2">Edit</span><span class="m mn3">Story(P)</span><span class="m mn4">Animation</span><span class="m mn5">Layer</span><span class="m mn6">Selection area</span><span class="m mn7">View</span><span class="m mn8">Filter</span><span class="m mn9">Window</span><span class="m">Help</span>
  </nav>

  <div class="workspace">
    <aside class="col">
      <div class="collapse"><svg class="chev2"><use href="#chev2"/></svg><svg class="chev1"><use href="#chev1"/></svg><svg class="gripi"><use href="#grip"/></svg></div>

      <section class="panel p-nav">
        <div class="phead">
          <span class="pmenu"><svg class="mi"><use href="#menu"/></svg></span>
          <span class="tab on"><svg class="ti"><use href="#navi"/></svg>Navigator</span>
          <span class="tab mini"><svg class="tm"><use href="#img"/></svg></span>
          <span class="tab mini"><svg class="tm"><use href="#tube"/></svg></span>
          <span class="tab mini"><svg class="tm"><use href="#info"/></svg></span>
        </div>
        <div class="navview">
          <div class="redline"></div>
          <div class="thumb">
            <div class="thumb-top"></div>
            <div class="thumb-body">
              <div class="th-left"><div class="th-gray"></div><div class="th-lines"></div><div class="th-gray grow"></div></div>
              <div class="th-mid"><div class="th-wheel"></div><svg class="th-pal"><use href="#palette"/></svg><div class="th-lines"></div><div class="th-btns"></div><div class="th-lines"></div></div>
              <div class="th-canvas"></div>
            </div>
          </div>
          <div class="redline"></div>
        </div>
        <div class="navctl">
          <div class="slider s-wedge">72.6</div>
          <svg class="i20 ml13"><use href="#magm"/></svg><svg class="i20"><use href="#magp"/></svg><svg class="i20"><use href="#fit"/></svg><svg class="i20 ml4"><use href="#flip1"/></svg><svg class="i20"><use href="#flip2"/></svg>
        </div>
        <div class="navctl">
          <div class="slider s-hump">0.0</div>
          <svg class="i20 ml13"><use href="#rotl"/></svg><svg class="i20"><use href="#rotr"/></svg><svg class="i20"><use href="#gear"/></svg><svg class="i20 ml4"><use href="#person"/></svg><svg class="i20"><use href="#rot3"/></svg>
        </div>
      </section>

      <section class="panel p-prop">
        <div class="phead tall">
          <span class="pmenu"><svg class="mi"><use href="#menu"/></svg></span>
          <span class="tab on"><svg class="ti"><use href="#check"/></svg>Layer Property</span>
          <span class="tab mini"><svg class="tm"><use href="#dial"/></svg></span>
          <span class="tab mini"><svg class="tm"><use href="#cloth"/></svg></span>
          <span class="tab mini"><svg class="tm"><use href="#flask"/></svg></span>
        </div>
        <div class="propbody">
          <div class="propmain">
            <div class="glabel">Effect</div>
            <div class="fxbox">
              <svg class="i16"><use href="#dotring"/></svg><svg class="i16"><use href="#bluec"/></svg><svg class="i16"><use href="#noisec"/></svg><svg class="i16"><use href="#blues"/></svg><svg class="caret"><use href="#caret"/></svg>
            </div>
            <div class="glabel">Expression color</div>
            <div class="combo excombo"><span class="excolor"><svg class="i14"><use href="#rgb"/></svg>Color</span><svg class="caret"><use href="#caret"/></svg></div>
          </div>
          <div class="vtrack"></div>
        </div>
      </section>

      <section class="panel p-layer">
        <div class="phead mid">
          <span class="pmenu"><svg class="mi"><use href="#menu"/></svg></span>
          <span class="tab on"><svg class="ti"><use href="#layers"/></svg>Layer</span>
          <span class="tab off"><svg class="ti"><use href="#history"/></svg>History</span>
          <span class="tab off"><svg class="ti"><use href="#autoa"/></svg>Auto Action</span>
        </div>
        <div class="blendrow">
          <div class="combo blend"><span class="blendtxt">Normal</span><svg class="caret"><use href="#caret"/></svg></div>
          <div class="opbar"></div>
          <span class="opval">100</span>
          <svg class="updown"><use href="#updown"/></svg>
        </div>
        <div class="layertools">
          <div class="colordd"><span class="ddswatch"></span><svg class="caret"><use href="#caret"/></svg></div>
          <svg class="i18 ml21"><use href="#clip"/></svg><svg class="i18 gl2"><use href="#lhouse"/></svg><svg class="i18 gl2"><use href="#pencolor"/></svg><svg class="i18 gl2"><use href="#lock"/></svg><svg class="i18"><use href="#locka"/></svg>
          <span class="ghostbtn"><svg class="ig"><use href="#pickx"/></svg></span><span class="ghostbtn"><svg class="ig"><use href="#lnx"/></svg></span>
        </div>
        <div class="layerlist">
          <div class="listmain">
            <div class="layerrow">
              <span class="cell-eye"><svg class="eye"><use href="#eye"/></svg></span>
              <span class="cell-pen"><svg class="pen"><use href="#pen"/></svg></span>
              <div class="layeritem">
                <div class="lthumb"><div class="lth-in"><i class="lth-gray"></i></div></div>
                <div class="lname"><div>100 % Normal</div><div>Layer 1</div></div>
              </div>
            </div>
          </div>
          <div class="vtrack"></div>
        </div>
        <div class="pfoot">
          <svg class="i20 fl"><use href="#layers"/></svg>
          <span class="spacer"></span>
          <svg class="i18"><use href="#page"/></svg><svg class="i18"><use href="#pagecopy"/></svg><svg class="i18"><use href="#pagefold"/></svg><svg class="i18"><use href="#merge"/></svg><svg class="i18"><use href="#merge"/></svg><svg class="i18"><use href="#maskb"/></svg><svg class="i18"><use href="#flag"/></svg><svg class="i18"><use href="#trashd"/></svg>
        </div>
      </section>
    </aside>
    <div class="split"></div>

    <aside class="col">
      <div class="collapse"><svg class="chev2"><use href="#chev2"/></svg><svg class="chev1"><use href="#chev1"/></svg><svg class="gripi"><use href="#grip"/></svg></div>

      <section class="panel p-wheel">
        <div class="phead">
          <span class="pmenu"><svg class="mi"><use href="#menu"/></svg></span>
          <span class="tab on"><span class="tabwheel"></span>Color Wheel</span>
          <span class="tab off"><svg class="ti"><use href="#slid"/></svg>Color Slider</span>
        </div>
        <div class="wheelbody">
          <div class="wheelstage">
            <div class="ring"></div>
            <svg class="tri" viewBox="0 0 72 86"><polygon points="0,0 72,44 0,86" fill="#e81808"/><polygon points="0,0 72,44 0,86" fill="url(#triW)"/><polygon points="0,0 72,44 0,86" fill="url(#triK)"/></svg>
            <span class="hue-handle"></span>
            <span class="tri-handle"></span>
          </div>
          <div class="fgbg">
            <div class="swbg"></div>
            <div class="swfg"></div>
            <div class="swtr"></div>
          </div>
          <div class="hls">
            <b>H</b><span class="hv">8</span><b>L</b><span class="hv">97</span><b>S</b><span class="hv">100</span><span class="miniwheel"></span>
          </div>
        </div>
      </section>

      <section class="panel p-cset">
        <div class="phead low">
          <span class="pmenu"><svg class="mi"><use href="#menu"/></svg></span>
          <span class="tab on"><svg class="ti"><use href="#cset"/></svg>Color Set</span>
        </div>
        <div class="csrow">
          <div class="combo cscombo"><span class="cstxt">Casey Colors</span><svg class="caret"><use href="#caret"/></svg></div>
          <svg class="i18"><use href="#wrench"/></svg><svg class="i18"><use href="#bag"/></svg>
        </div>
        <div class="cspal">
          <div class="palwrap"><svg class="palsvg"><use href="#palette"/></svg></div>
          <div class="vsb"><i class="vb"><svg class="c8"><use href="#upcaret"/></svg></i><i class="vthumb"></i><i class="vgrow"></i><i class="vb"><svg class="c8"><use href="#fadecaret"/></svg></i></div>
        </div>
        <div class="csfoot">
          <i class="mini-sq r"></i><i class="mini-sq g"></i><i class="mini-sq b"></i>
          <span class="spacer"></span>
          <svg class="i18 dim"><use href="#bag"/></svg><svg class="i18"><use href="#dropplus"/></svg><svg class="i18"><use href="#trashd"/></svg>
        </div>
      </section>

      <section class="panel p-tool">
        <div class="phead low">
          <span class="pmenu"><svg class="mi"><use href="#menu"/></svg></span>
          <span class="tab on"><svg class="ti"><use href="#penstand"/></svg>Tool</span>
        </div>
        <div class="toolrow r1">
          <span class="tcell"><svg><use href="#t-mag"/></svg></span><span class="tcell"><svg><use href="#t-hand"/></svg></span><span class="tcell"><svg><use href="#t-box"/></svg></span><span class="tcell"><svg><use href="#t-move"/></svg></span><span class="tcell sel"><svg><use href="#t-sel"/></svg></span><span class="tcell"><svg><use href="#t-wand"/></svg></span><span class="tcell"><svg><use href="#t-drop"/></svg></span>
        </div>
        <div class="toolrow">
          <span class="tcell"><svg><use href="#t-brush"/></svg></span><span class="tcell"><svg class="sq18"><use href="#t-penc"/></svg></span><span class="tcell"><svg class="sq18"><use href="#t-penp"/></svg></span><span class="tcell"><svg><use href="#t-ink"/></svg></span><span class="tcell"><svg class="sq18 tall20"><use href="#t-noise"/></svg></span><span class="tcell"><svg class="sq18"><use href="#t-sky"/></svg></span><span class="tcell"><svg><use href="#t-erase"/></svg></span><span class="tcell"><svg><use href="#t-blend"/></svg></span>
        </div>
        <div class="toolrow">
          <span class="tcell"><svg><use href="#t-fill"/></svg></span><span class="tcell"><svg><use href="#t-grad"/></svg></span><span class="tcell"><svg><use href="#t-line"/></svg></span><span class="tcell"><svg><use href="#t-frame"/></svg></span><span class="tcell"><svg><use href="#t-rule"/></svg></span><span class="tcell tA">A</span><span class="tcell"><svg><use href="#t-ball"/></svg></span><span class="tcell"><svg><use href="#t-arrow"/></svg></span>
        </div>
        <div class="colorbar">
          <div class="cb-red"></div><div class="cb-wht"></div><div class="cb-chk"></div>
        </div>
      </section>

      <section class="panel p-sub">
        <div class="phead sub">
          <span class="pmenu"><svg class="mi"><use href="#menu"/></svg></span>
          <span class="tab on"><svg class="ti"><use href="#subt"/></svg>Sub Tool [Selection area]</span>
          <span class="tab mini"><svg class="tm"><use href="#tube"/></svg></span>
          <span class="tab mini"><svg class="tm"><use href="#tube"/></svg></span>
        </div>
        <div class="subgroup"><div class="groupbtn"><svg class="rectic"><use href="#t-sel"/></svg>Selection area</div></div>
        <div class="sublist">
          <div class="subitems">
            <div class="sitem on"><svg class="sic"><use href="#rect"/></svg><span class="sname hl">Rectangle</span></div>
            <div class="sitem"><svg class="sic"><use href="#ellip"/></svg><span class="sname">Ellipse</span></div>
            <div class="sitem"><svg class="sic"><use href="#lasso"/></svg><span class="sname">Lasso</span></div>
            <div class="sitem"><svg class="sic poly"><use href="#poly"/></svg><span class="sname">Polyline</span></div>
            <div class="sitem"><span class="stroke"><svg class="fuzz"><use href="#fuzz"/></svg><svg class="wave"><use href="#wave"/></svg></span><span class="sname">Selection pen</span></div>
            <div class="sitem"><span class="stroke"><svg class="fuzz"><use href="#fuzze"/></svg><svg class="wave"><use href="#wave"/></svg></span><span class="sname">Erase selection</span></div>
            <div class="sitem"><svg class="sic"><use href="#lasso"/></svg><span class="sname">Shrink selection</span></div>
          </div>
          <div class="vtrack"></div>
        </div>
        <div class="pfoot sf"><svg class="i18"><use href="#bag"/></svg><svg class="i18"><use href="#page"/></svg><svg class="i18"><use href="#trash"/></svg></div>
      </section>
    </aside>
    <div class="split wide"></div>

    <main class="stage">
      <div class="cmdbar">
        <span class="logobtn"><svg class="logo"><use href="#logo"/></svg></span>
        <div class="cgroup g-file"><svg class="i20"><use href="#newp"/></svg><svg class="i20"><use href="#folder"/></svg><svg class="i20"><use href="#save"/></svg><svg class="caret"><use href="#caret"/></svg></div>
        <div class="cgroup"><svg class="i20"><use href="#undo"/></svg><svg class="i20"><use href="#redo"/></svg></div>
        <div class="cgroup g-tight"><svg class="i20"><use href="#dots"/></svg><svg class="i20"><use href="#chipd"/></svg><svg class="i20"><use href="#bucket"/></svg><svg class="i20"><use href="#trans"/></svg></div>
        <div class="cgroup"><svg class="i20"><use href="#dis1"/></svg><svg class="i20"><use href="#dis2"/></svg><svg class="i20"><use href="#dis3"/></svg></div>
        <div class="cgroup g-ruler"><span class="rbtn on"><svg class="i20"><use href="#ruler1"/></svg></span><span class="rbtn on"><svg class="i20"><use href="#ruler2"/></svg></span><span class="rbtn"><svg class="i20"><use href="#ruler3"/></svg></span></div>
        <span class="helpbtn"><b class="helpdot">?</b></span>
      </div>
      <div class="docbar">
        <div class="doctab"><span class="dtxt">Doodle[Restore]</span><i class="ddot"></i></div>
        <div class="doctab on"><span class="dtxt">Illustration*</span><i class="ddot"></i></div>
        <span class="spacer"></span>
        <span class="sbbtn tallb"><svg class="c8d"><use href="#caret"/></svg></span>
      </div>
      <div class="viewrow">
        <div class="view">
          <div class="sai">
            <div class="sai-title"><span class="sai-ico"></span><span class="sai-tt">PaintTool SAI Ver.2 (64bit) Preview.2018.05.07</span>
              <span class="sw sw-g"><i class="smin"></i></span><span class="sw sw-g"><i class="srest"></i></span><span class="sw sw-r">✕</span>
            </div>
            <div class="sai-menu">
              <span class="sm s1"><u>F</u>ile</span><span class="sm s2"><u>E</u>dit</span><span class="sm s3"><u>C</u>anvas</span><span class="sm s4"><u>L</u>ayer</span><span class="sm s5"><u>S</u>election</span><span class="sm s6"><u>R</u>uler</span><span class="sm s7">Fil<u>t</u>er</span><span class="sm s8"><u>V</u>iew</span><span class="sm s9"><u>W</u>indow</span><span class="sm"><u>H</u>elp</span>
            </div>
            <div class="sai-body">
              <div class="sai-left">
                <div class="sl-preview"></div>
                <div class="sl-slider"><div class="sl-track"><span class="dis">Scale</span><i class="sl-line"></i><i class="sl-tri"></i></div><i class="dbtn"></i><i class="dbtn"></i><i class="dbtn"></i></div>
                <div class="sl-slider"><div class="sl-track"><span class="dis">Angle</span><i class="sl-line"></i><i class="sl-tri"></i></div><i class="dbtn"></i><i class="dbtn"></i><i class="dbtn"></i></div>
                <div class="divider"><i class="dgrip"></i></div>
                <div class="sl-head"><i class="tri-d"></i>Layer Effect</div>
                <div class="frow r14"><span class="dis lab">Paper</span><div class="fld long"><i class="ddb"><svg class="c6"><use href="#fadecaret"/></svg></i></div></div>
                <div class="frow"><span class="dis lab">Intensity</span><div class="fld mid dis">0</div></div>
                <div class="frow"><span class="dis lab">Scale</span><div class="fld long dis barl">10%</div></div>
                <div class="chkrow"><i class="cb dimcb"></i><span class="dis">Apply to Linework</span></div>
                <div class="frow r14 mt6"><span class="dis lab">Effect</span><div class="fld long"><i class="ddb"><svg class="c6"><use href="#fadecaret"/></svg></i></div></div>
                <div class="frow mtw"><span class="dis lab">Width</span><div class="fld mid dis barl w2">1</div></div>
                <div class="frow"><span class="dis lab">Intensity</span><div class="fld mid dis">0</div></div>
                <div class="hline"></div>
                <div class="frow r14"><span class="dis lab lab2">Mode</span><div class="fld grow"><i class="ddb"><svg class="c6"><use href="#fadecaret"/></svg></i></div></div>
                <div class="frow mt3"><span class="dis lab lab2">Opacity</span><div class="fld grow dis">0%</div></div>
                <div class="frow lockrow"><span class="dis lab lab2">Lock</span><svg class="g12 m36"><use href="#gh-page"/></svg><svg class="g12"><use href="#gh-pen"/></svg><svg class="g12"><use href="#gh-mv"/></svg><svg class="g12"><use href="#gh-lk"/></svg></div>
                <div class="chkrow tight"><i class="cb dimcb"></i><span class="dis nw">Clipping Group</span><i class="cb round dimcb rg6"></i><span class="dis nw">Selection Source</span></div>
                <div class="sl-layers">
                  <div class="gh-row"><svg class="g14"><use href="#gh-page"/></svg><svg class="g14"><use href="#gh-pen"/></svg><svg class="g14"><use href="#gh-page"/></svg><svg class="g14 m20"><use href="#gh-mv"/></svg><span class="spacer"></span><i class="dbtn sqdot"></i></div>
                  <div class="gh-row"><svg class="g14"><use href="#gh-pen"/></svg><svg class="g14"><use href="#gh-mv"/></svg><svg class="g14"><use href="#gh-pen"/></svg><svg class="g14"><use href="#gh-bin"/></svg><span class="spacer"></span><svg class="g14"><use href="#gh-page"/></svg></div>
                  <div class="sl-listrow">
                    <div class="sl-list"></div>
                    <div class="sl-sb"><i class="dbtn tiny"><svg class="c6"><use href="#upcaret"/></svg></i><span class="spacer"></span></div>
                  </div>
                  <div class="sl-bot"><i class="dbtn tiny"></i><span class="spacer"></span><i class="dbtn tiny"></i></div>
                </div>
              </div>

              <div class="sai-mid">
                <div class="wtabs"><i class="wt sel"><span class="wtring"></span></i><i class="wt"><b class="bars b1"></b></i><i class="wt"><b class="bars b2"></b></i><i class="wt"><b class="bars b3"></b></i><i class="wt sel"><b class="bars b4"></b></i><i class="wt"><b class="bars b5"></b></i></div>
                <div class="swheelwrap"><div class="swheel"><div class="swsq"><span class="cy cy2"></span></div><span class="cy cy1"></span></div></div>
                <div class="spalrow">
                  <div class="spalwrap"><svg class="spal"><use href="#palette"/></svg></div>
                  <div class="ssb"><i class="sbb"><svg class="c6"><use href="#upcaret"/></svg></i><i class="sbt st1"></i><span class="spacer"></span><i class="sbb"><svg class="c6"><use href="#fadecaret"/></svg></i></div>
                </div>
                <div class="gripline"><i class="dgrip"></i></div>
                <div class="stools">
                  <div class="stoolgrid">
                    <i class="st on"><svg><use href="#s-sel"/></svg></i><i class="st"><svg><use href="#s-las"/></svg></i><i class="st"><svg><use href="#s-wand"/></svg></i><i class="st"><svg><use href="#s-shape"/></svg></i><i class="st stT">T</i>
                    <i class="st"><svg><use href="#s-move"/></svg></i><i class="st"><svg><use href="#s-mag"/></svg></i><i class="st"><svg><use href="#s-rot"/></svg></i><i class="st"><svg><use href="#s-hand"/></svg></i><i class="st"><svg><use href="#s-drop"/></svg></i>
                  </div>
                  <div class="scolors">
                    <div class="scfg"></div><svg class="scarrow"><use href="#swapa"/></svg>
                    <div class="scbottom"><i class="scsmall"></i><div class="scbg"></div></div>
                  </div>
                </div>
                <div class="sbrushrow">
                  <div class="sbrushes">
                    <div class="bc c14">Sketch<svg class="bp"><use href="#s-pen"/></svg></div><div class="bc c14">Lines<svg class="bp"><use href="#s-pen"/></svg></div><div class="bc c14">Blend<svg class="bp"><use href="#s-pen"/></svg></div><div class="bc c14">Lines<svg class="bp"><use href="#s-pen"/></svg></div>
                    <div class="bc"><span class="bl">BAND...</span>Sketch<svg class="bp"><use href="#s-pen"/></svg></div><div class="bc"><span class="bl">Pencil</span><svg class="bp"><use href="#s-pen"/></svg></div><div class="bc"><span class="bl">Bruises</span><svg class="bp"><use href="#s-pen"/></svg></div><div class="bc em"></div>
                    <div class="bc em"></div><div class="bc em"></div><div class="bc em"></div><div class="bc em"></div>
                    <div class="bc cut">Pencil</div><div class="bc em cut"></div><div class="bc cut">sketch</div><div class="bc em cut"></div>
                  </div>
                  <div class="ssb"><i class="sbb"><svg class="c6"><use href="#upcaret"/></svg></i><span class="spacer"></span><i class="sbt st2"></i><span class="spacer"></span><i class="sbb"><svg class="c6"><use href="#fadecaret"/></svg></i></div>
                </div>
                <div class="gripline gl"><i class="dgrip"></i></div>
                <div class="opt"><i class="cb on">✓</i>Pick Layer by Ctrl+LeftClick</div>
                <div class="opt"><i class="cb on">✓</i>Cut &amp; Move without Effect Key</div>
                <div class="sep"></div>
                <div class="otext">Drag Detection Distance:</div>
                <div class="dd"><span class="ddl">Move</span><div class="ddf"><i class="ddfill"></i>±16 px</div></div>
                <div class="dd tdd"><span class="ddl">Pick &amp; Move</span><div class="ddf"><i class="ddfill"></i>±16 px</div></div>
                <div class="sep se7"></div>
                <div class="opt r13"><i class="cb round"></i>Freeform</div>
                <div class="opt r13"><i class="cb round"></i>Resize</div>
                <div class="opt r13"><i class="cb round"></i>Deform</div>
                <div class="opt r13"><i class="cb round"></i>Rotate</div>
                <div class="okrow"><span class="okb">OK</span><span class="okb">Cancel</span></div>
                <div class="sep se1"></div>
                <div class="perspective"><span>Perspective</span><div class="pf">0</div></div>
                <div class="sep se2"></div>
                <div class="actb">Reverse Horizontal</div>
                <div class="actb">Reverse Vertical</div>
                <div class="actb">Rotate 90deg. CCW</div>
                <div class="actb">Rotate 90deg. CW</div>
                <div class="sep se3"></div>
                <div class="otext">Resample Settings:</div>
                <div class="rs"><span class="rsl">Dragging</span><div class="rsf">Bilinear<i class="ddb dark"><svg class="c6"><use href="#fadecaret"/></svg></i></div></div>
                <div class="rs"><span class="rsl">Preview</span><div class="rsf">Lanczos 3<i class="ddb dark"><svg class="c6"><use href="#fadecaret"/></svg></i></div></div>
                <div class="rs"><span class="rsl">Final</span><div class="rsf">Lanczos 3<i class="ddb dark"><svg class="c6"><use href="#fadecaret"/></svg></i></div></div>
                <div class="sep se4"></div>
                <div class="opt"><i class="cb on">✓</i>Keep Line Width of Shapes</div>
              </div>

              <div class="sai-vbar"><i class="dbtn tiny"><svg class="c6"><use href="#upcaret"/></svg></i><span class="spacer"></span><i class="dbtn tiny"><svg class="c6"><use href="#fadecaret"/></svg></i></div>

              <div class="sai-right">
                <div class="sai-tb">
                  <i class="dbtn t15"></i><i class="dbtn t15"></i>
                  <i class="dbtn t15 gap5"></i><i class="dbtn t15"></i>
                  <i class="cb wide dimcb"></i><span class="dis tbsel">Selection</span>
                  <i class="tbcombo"><i class="ddb"><svg class="c6"><use href="#fadecaret"/></svg></i></i>
                  <i class="dbtn t14"></i><i class="dbtn t14"></i><i class="dbtn t14"></i>
                  <i class="tbcombo gap5"><i class="ddb"><svg class="c6"><use href="#fadecaret"/></svg></i></i>
                  <i class="dbtn t14"></i><i class="dbtn t14"></i><i class="dbtn t14"></i>
                  <svg class="swap"><use href="#swap2"/></svg>
                  <span class="stab">Stabilizer</span>
                  <div class="stabf">15<i class="ddb dark"><svg class="c6"><use href="#fadecaret"/></svg></i></div>
                  <i class="penbtn"><svg class="i12"><use href="#diag"/></svg></i>
                </div>
                <div class="sai-canvas"></div>
              </div>
            </div>
          </div>
        </div>
        <div class="vscroll">
          <span class="sbbtn"><svg class="c8u"><use href="#caret"/></svg></span>
          <span class="spacer"></span>
          <span class="sbbtn"><svg class="c8d"><use href="#caret"/></svg></span>
        </div>
      </div>
      <div class="statusrow">
        <div class="slider stw s-wedge">72.6</div>
        <svg class="i14s"><use href="#magm"/></svg><svg class="i14s"><use href="#magp"/></svg><svg class="i14s"><use href="#fit"/></svg>
        <div class="slider stw sth s-hump">0.0</div>
        <svg class="i14s near"><use href="#rotl"/></svg><svg class="i14s"><use href="#rotr"/></svg><svg class="i14s"><use href="#gear"/></svg>
        <div class="hsb">
          <span class="hb"></span>
          <span class="hgap1"></span>
          <span class="hthumb"></span>
          <span class="spacer"></span>
          <span class="hb"></span>
        </div>
        <span class="corner"></span>
      </div>
      <div class="timeline">
        <div class="tlarrows"><svg class="c12"><use href="#upcaret"/></svg><svg class="c12"><use href="#fadecaret"/></svg></div>
        <span class="tlbtn"><svg class="tli"><use href="#timel"/></svg></span>
        <span class="tlbtn"><svg class="tli"><use href="#camera"/></svg></span>
      </div>
    </main>
    <div class="rail"><span class="railbtn"><svg class="chev2"><use href="#chev2"/></svg></span></div>
  </div>
</div>
</body>
</html>
```

FILE: styles.css
```css
* { box-sizing: border-box; }
html, body { margin: 0; padding: 0; height: 100%; overflow: hidden; }
body { width: 1919px; height: 1038px; background: #5c5c5c; font-family: Roboto, "Liberation Sans", sans-serif; font-size: 11px; color: #dedede; }
i { font-style: normal; display: block; }
svg { display: block; flex: none; }
.sprite { width: 0; height: 0; overflow: hidden; }
.spacer { flex: 1 1 auto; }
.app { width: 1919px; height: 1038px; display: flex; flex-direction: column; }

.titlebar { height: 23px; background: linear-gradient(#636363, #454545); display: flex; align-items: center; color: #cfcfcf; font-size: 11.700px; }
.title-text { width: 100%; text-align: center; }
.winbtns { display: flex; gap: 2px; padding-right: 1px; flex: none; margin-left: -60px; }
.winbtn { width: 16px; height: 16px; border-radius: 50%; background: #222; display: flex; align-items: center; justify-content: center; color: #ddd; font-size: 11px; font-weight: 700; }
.wb-min { width: 10px; height: 3px; background: #ccc; margin-top: 7px; }
.wb-max { width: 10px; height: 9px; border: 2px solid #bbb; }
.menubar { height: 23px; background: #77787b; border-top: 1px solid #2f2f2f; border-bottom: 1px solid #4a4a4a; display: flex; align-items: center; padding-left: 14px; font-size: 12px; color: #e4e4e4; }
.m { display: block; }
.mn1 { margin-right: 22px; } .mn2 { margin-right: 19.500px; } .mn3 { margin-right: 20.500px; } .mn4 { margin-right: 20.400px; } .mn5 { margin-right: 22.400px; } .mn6 { margin-right: 20px; } .mn7 { margin-right: 19.600px; } .mn8 { margin-right: 22.200px; } .mn9 { margin-right: 23.200px; }

.workspace { flex: 1; display: grid; grid-template-columns: 226px 4px 220px 5px 1451px 13px; min-height: 0; }
.col { display: flex; flex-direction: column; min-height: 0; background: #77787b; }
.split { background: repeating-linear-gradient(90deg, #3a3a3a 0 1px, #7d7d7d 1px 3px); }
.split.wide { background: repeating-linear-gradient(90deg, #3a3a3a 0 1px, #7d7d7d 1px 4px); }
.collapse { height: 22px; background: #646464; display: flex; align-items: center; padding: 0 0 0 2px; }
.chev2 { width: 11px; height: 13px; }
.chev1 { width: 6px; height: 13px; margin-left: 15px; }
.gripi { width: 8px; height: 8px; margin-left: auto; }

.panel { display: flex; flex-direction: column; background: #77787b; min-height: 0; }
.p-nav { height: 244px; }
.p-prop { height: 121px; }
.p-layer { flex: 1; }
.p-wheel { height: 174px; }
.p-cset { height: 164px; }
.p-tool { height: 131px; }
.p-sub { flex: 1; }

.phead { height: 17px; background: #5d5d5d; border-top: 1px solid #3e3e3e; border-bottom: 1px solid #3e3e3e; display: flex; align-items: flex-end; padding-left: 1px; flex: none; }
.phead.tall { height: 21px; }
.phead.mid { height: 19px; }
.phead.low { height: 16px; }
.phead.sub { height: 17px; }
.pmenu { width: 17px; height: 100%; display: flex; align-items: center; justify-content: center; margin-right: 1px; }
.mi { width: 9px; height: 9px; }
.tab { height: calc(100% - 1px); margin-bottom: -1px; display: flex; align-items: flex-end; line-height: 11px; gap: 4px; padding: 0 4px; background: #6a6b6e; border: 1px solid #404040; border-bottom: none; color: #d8d8d8; font-size: 9.800px; white-space: nowrap; flex: none; border-radius: 2px 2px 0 0; }
.phead.tall .tab { padding-bottom: 3px; }
.phead.mid .tab { padding-bottom: 1px; }
.p-cset .tab { margin-bottom: -3px; }
.tab.on { background: #6f7073; }
.tab.mini { background: #616161; width: 28px; justify-content: center; padding: 0; }
.tab.off { background: #616161; color: #8c8c8c; }
.ti { width: 16px; height: 15px; }
.tm { width: 14px; height: 13px; }
.tabwheel { width: 15px; height: 15px; border-radius: 50%; flex: none; background: radial-gradient(circle, #555 0 3.500px, transparent 4px), conic-gradient(#ff0, #0f0, #0ff, #00f, #f0f, #f00, #ff0); }

.navview { height: 176px; margin: 5px 3px 0 1px; background: #404040; padding: 14px 0 0 1px; display: flex; flex-direction: column; width: 222px; }
.redline { height: 1.500px; background: #ff0000; flex: none; }
.thumb { height: 117px; margin-top: 15px; margin-bottom: 7px; flex: none; display: flex; flex-direction: column; background: #fafafa; width: 219px; }
.thumb-top { height: 3px; background: #2e2e2e; flex: none; }
.thumb-body { flex: 1; display: flex; padding: 3px 0 2px 1px; }
.th-left { width: 27px; display: flex; flex-direction: column; }
.th-gray { height: 19px; background: #bcbcbc; }
.th-gray.grow { flex: 1; margin-top: 2px; }
.th-lines { height: 30px; background: repeating-linear-gradient(#f0f0f0 0 2px, #ddd 2px 3px); flex: none; }
.th-mid { width: 27px; display: flex; flex-direction: column; align-items: center; gap: 2px; }
.th-wheel { width: 19px; height: 19px; margin-top: 2px; border-radius: 50%; background: radial-gradient(circle, #222 0 4px, #fff 5px 6.500px, transparent 7px), conic-gradient(#ff0, #0f0, #0ff, #00f, #f0f, #f00, #ff0); }
.th-pal { width: 23px; height: 14px; }
.th-mid .th-lines { width: 24px; height: 18px; }
.th-btns { height: 10px; width: 22px; background: #8c8c8c; flex: none; }
.th-canvas { flex: 1; background: #bfbfbf; margin-left: 1px; margin-right: 1px; }

.navctl { height: 22px; display: flex; align-items: center; padding: 4px 0 0 6px; }
.navctl + .navctl { padding-top: 1px; }
.slider { width: 108px; height: 12px; font-size: 13px; line-height: 13px; color: #dcdcdc; padding-left: 2px; border-left: 1px solid #3a3a3a; flex: none; }
.s-wedge { background: linear-gradient(90deg, transparent 58px, #666 58px, #666 62px, transparent 62px), linear-gradient(176.500deg, #77787b 49%, #3a3a3a 51%); }
.s-hump { background: linear-gradient(90deg, transparent 52px, #666 52px, #666 55px, transparent 55px), radial-gradient(ellipse 60% 105% at 68% 110%, #3a3a3a 97%, transparent 100%), linear-gradient(#77787b, #77787b); }
.i20 { width: 20px; height: 20px; flex: none; }
.navctl .i20 { width: 16px; height: 16px; margin-left: 4px; }
.navctl .ml13 { margin-left: 6px; }
.navctl .ml4 { margin-left: 7px; }
.i18 { width: 18px; height: 18px; flex: none; }
.i16 { width: 16px; height: 16px; flex: none; }
.i14 { width: 14px; height: 14px; flex: none; }
.i12 { width: 12px; height: 12px; flex: none; }
.caret { width: 9px; height: 5px; flex: none; }

.propbody { flex: 1; display: flex; padding-left: 1px; padding-bottom: 2px; min-height: 0; }
.propmain { flex: 1; padding: 4px 3px 0 10px; }
.vtrack { width: 11px; background: #69696a; margin-right: 4px; flex: none; border-bottom: 2px solid #8a8a8a; }
.glabel { display: flex; align-items: center; gap: 2px; height: 14px; font-size: 10.500px; color: #dcdcdc; }
.glabel::after { content: ""; flex: 1; height: 1px; background: #8a8a8a; }
.fxbox { display: flex; align-items: center; gap: 8px; width: 109px; height: 19px; margin: 1px 0 3px 87px; padding-left: 3px; background: #6d6e71; border: 1px solid #4a4a4a; border-radius: 2px; }
.fxbox .caret { margin-left: -1px; }
.combo { display: flex; align-items: center; background: linear-gradient(#6f7073, #68696c); border: 1px solid #4f4f4f; border-radius: 2px; color: #dcdcdc; flex: none; }
.excombo { width: 137px; height: 19px; margin: 3px 0 0 7px; padding-right: 3px; font-size: 11.500px; }
.excolor { flex: 1; display: flex; justify-content: center; align-items: center; gap: 6px; }

.blendrow { height: 24px; display: flex; align-items: center; padding: 3px 0 0 3px; flex: none; }
.blend { width: 109px; height: 18px; padding-right: 4px; font-size: 10.500px; }
.blendtxt { flex: 1; text-align: center; }
.opbar { width: 67px; height: 8px; margin-left: 7px; background: linear-gradient(90deg, #fff, transparent), repeating-conic-gradient(#ccc 0 25%, #eee 0 50%) 0 0 / 8px 8px; border-right: 3px solid #666; }
.opval { width: 29px; text-align: right; font-size: 12px; padding-right: 1px; }
.updown { width: 9px; height: 14px; margin-left: 0; }
.layertools { height: 22px; display: flex; align-items: center; padding-left: 3px; margin-top: 1px; flex: none; }
.colordd { width: 33px; height: 18px; background: #6d6e71; border: 1px solid #4f4f4f; display: flex; align-items: center; gap: 2px; flex: none; }
.ddswatch { width: 20px; height: 100%; background: #77787b; border: 1px solid #222; }
.ml21 { margin-left: 24px; }
.gl2 { margin-left: 2px; }
.ghostbtn { width: 30px; height: 19px; margin-left: 3px; background: #6e6f72; border: 1px solid #8a8a8a; border-radius: 2px; display: flex; align-items: center; justify-content: center; flex: none; }
.ghostbtn:first-of-type { margin-left: 7px; }
.ig { width: 22px; height: 16px; }
.layerlist { flex: 1; display: flex; padding-left: 4px; min-height: 0; margin-top: 2px; }
.listmain { flex: 1; border-left: 1px solid #3c3c3c; min-width: 0; }
.layerrow { height: 33px; display: flex; border-top: 1px solid #54545a; border-bottom: 1px solid #4a4a4a; }
.cell-eye { width: 20px; display: flex; align-items: center; justify-content: center; border-right: 1px solid #4a4a4a; }
.eye { width: 13px; height: 10px; }
.cell-pen { width: 18px; display: flex; align-items: center; justify-content: center; border-right: 1px solid #4a4a4a; }
.pen { width: 13px; height: 13px; }
.layeritem { flex: 1; display: flex; gap: 2px; background: linear-gradient(#829aa8, #5f7a8b); padding-left: 4px; align-items: center; border: 1px solid #6e8998; }
.lthumb { width: 37px; height: 30px; border: 2px solid #111; background: #fff; padding: 1px; flex: none; }
.lth-in { height: 100%; display: flex; flex-direction: column; background: #555; padding: 3px 0; }
.lth-gray { flex: 1; background: linear-gradient(90deg, #eee 0 20%, #c0c0c0 20%); }
.lname { font-size: 10.500px; line-height: 13px; color: #e6e6e6; padding-top: 1px; }
.pfoot { height: 22px; border-top: 1px solid #5a5a5a; display: flex; align-items: center; gap: 2px; padding: 1px 5px 0 3px; flex: none; background: #77787b; }
.pfoot .i18 { width: 18px; height: 17px; }
.pfoot .fl { width: 17px; height: 17px; }
.pfoot.sf { justify-content: flex-end; padding-right: 2px; }

.wheelbody { flex: 1; display: flex; flex-direction: column; position: relative; min-height: 0; }
.wheelstage { width: 132px; height: 132px; margin: 6px 0 0 45px; position: relative; flex: none; }
.ring { width: 132px; height: 132px; border-radius: 50%; background: radial-gradient(circle, #77787b 0 53.500px, #3a3a3a 54px 55px, transparent 55.500px), conic-gradient(#ff0 0deg, #0f0 60deg, #0ff 120deg, #00f 180deg, #f0f 240deg, #f00 300deg, #ff0 360deg); box-shadow: 0 0 0 1px #4a4a4a; }
.tri { position: absolute; left: 42px; top: 22px; width: 72px; height: 86px; }
.hue-handle { position: absolute; left: 13px; top: 23px; width: 11px; height: 11px; background: #e33; border: 2px solid #fff; outline: 1px solid #333; transform: rotate(30deg); }
.tri-handle { position: absolute; left: 37px; top: 18px; width: 9px; height: 9px; border-radius: 50%; background: #ddd; border: 1px solid #444; }
.fgbg { position: absolute; left: 1px; top: 100px; width: 38px; height: 52px; }
.swbg { position: absolute; left: 13px; top: 13px; width: 25px; height: 25px; background: #fff2f0; border: 2px solid #111; outline: 2px solid #8ac8ee; outline-offset: -1px; }
.swfg { position: absolute; left: 0; top: 0; width: 26px; height: 26px; background: #c60000; border: 1px solid #333; }
.swtr { position: absolute; left: 0; top: 40px; width: 38px; height: 11px; border: 1px solid #333; background: repeating-conic-gradient(#444 0 25%, #fff 0 50%) 0 0 / 10px 10px; }
.hls { position: absolute; left: 97px; top: 135px; width: 122px; height: 20px; display: flex; align-items: center; font-size: 13.500px; color: #d8d8d8; }
.hls b { width: 8px; height: 8px; background: #111; color: #fff; font-size: 8px; line-height: 8px; text-align: center; flex: none; font-weight: 700; }
.hv { width: 24px; text-align: center; flex: none; }
.miniwheel { width: 17px; height: 17px; margin-left: 4px; border-radius: 50%; flex: none; background: radial-gradient(circle, #222 0 4px, #666 5px 5.500px, transparent 6px), conic-gradient(#ff0, #0f0, #0ff, #00f, #f0f, #f00, #ff0); }

.csrow { height: 18px; margin-top: 7px; display: flex; align-items: center; padding-left: 1px; gap: 3px; flex: none; }
.cscombo { width: 180px; height: 19px; padding-right: 3px; font-size: 10.500px; }
.cstxt { flex: 1; text-align: center; padding-left: 4px; }
.cspal { height: 96px; margin-top: 3px; display: flex; padding-left: 1px; flex: none; }
.palwrap { width: 207px; height: 96px; background: repeating-conic-gradient(#666 0 25%, #fff 0 50%) 0 0 / 12px 12px; flex: none; }
.palsvg { width: 144px; height: 96px; }
.vsb { width: 11px; margin-left: 1px; background: #6a6a6a; display: flex; flex-direction: column; gap: 1px; }
.vb { height: 11px; background: #7f7f7f; border: 1px solid #999; display: flex; align-items: center; justify-content: center; flex: none; }
.c8 { width: 7px; height: 4px; }
.vthumb { height: 30px; background: #77787b; border: 1px solid #999; flex: none; margin-top: 1px; }
.vgrow { flex: 1; }
.csfoot { flex: 1; display: flex; align-items: center; padding: 0 2px 0 2px; gap: 3px; }
.mini-sq { width: 8px; height: 8px; border: 1px solid #333; margin-right: 24px; flex: none; }
.mini-sq.r { background: #8a0000; }
.mini-sq.g { background: #008a10; }
.mini-sq.b { background: #0000a0; }
.dim { opacity: .45; }

.toolrow { display: grid; grid-template-columns: repeat(8, 27.250px); height: 26px; margin: 3px 0 0 1px; padding-left: 1px; border-top: 1px solid #55555a; background: #77787b; width: 218px; flex: none; }
.toolrow.r1 { margin-top: 6px; }
.tcell { display: flex; align-items: center; justify-content: center; color: #111; }
.tcell svg { width: 21px; height: 21px; }
.tcell svg.sq18 { width: 18px; height: 18px; }
.tcell svg.tall20 { height: 20px; }
.tcell.sel { background: #68808f; border: 1px solid #85a0ae; border-radius: 2px; margin: 0 2px 1px 2px; }
.tA { font: 700 22px "Liberation Serif", serif; color: #222; }
.colorbar { display: flex; height: 20px; margin: 2px 0 0 2px; gap: 3px; width: 219px; }
.cb-red { width: 70px; background: #c60000; border: 1px solid #333; }
.cb-wht { width: 72px; background: #fff2f0; border: 2px solid #111; outline: 2px solid #8ac8ee; outline-offset: -1px; }
.cb-chk { width: 71px; border: 1px solid #333; background: repeating-conic-gradient(#444 0 25%, #fff 0 50%) 0 0 / 12px 12px; margin-left: 1px; }

.subgroup { height: 33px; padding: 6px 0 2px 1px; flex: none; }
.groupbtn { width: 148px; height: 25px; background: linear-gradient(#80989f, #64808e); border: 1px solid #3e3e3e; border-radius: 2px; display: flex; align-items: center; gap: 4px; padding-left: 2px; font-size: 11px; color: #e8e8e8; }
.rectic { width: 20px; height: 20px; }
.sublist { flex: 1; display: flex; min-height: 0; margin-top: 2px; padding-left: 1px; }
.subitems { flex: 1; min-width: 0; }
.sitem { height: 36px; border-bottom: 1px solid #3f3f3f; display: flex; justify-content: space-between; padding: 4px 3px 0 3px; align-items: flex-start; }
.sitem.on { height: 34px; background: linear-gradient(#8099a8, #5f7a8b); border: 1px solid #83a0ae; border-bottom-color: #3f3f3f; }
.sname { align-self: flex-end; font-size: 10.600px; color: #e6e6e6; line-height: 14px; }
.sname.hl { background: #6f8997; padding-left: 3px; }
.sic { width: 20px; height: 15px; margin-top: 1px; }
.sic.poly { height: 20px; }
.stroke { display: flex; align-items: flex-start; }
.fuzz { width: 26px; height: 24px; margin-top: 1px; }
.wave { width: 96px; height: 24px; margin-left: -3px; }

.stage { display: flex; flex-direction: column; min-width: 0; background: #424242; }
.cmdbar { height: 27px; background: #77787b; border-top: 1px solid #2b2b2b; display: flex; align-items: center; padding: 0 0 1px 1px; flex: none; }
.logobtn { width: 40px; height: 20px; background: linear-gradient(#fff, #cfcfcf); border-radius: 2px; display: flex; align-items: center; justify-content: center; flex: none; }
.logo { width: 20px; height: 15px; }
.cgroup { display: flex; align-items: center; gap: 4px; margin-left: 7px; padding-left: 5px; border-left: 1px solid #8c8c8c; height: 23px; }
.g-file { gap: 5px; padding-left: 3px; margin-left: 5px; }
.g-file .caret { margin-left: -1px; }
.g-tight { margin-left: 6px; }
.g-ruler { margin-left: 6px; padding-left: 2px; }
.rbtn { width: 23px; height: 23px; display: flex; align-items: center; justify-content: center; margin-right: -3px; border-radius: 2px; }
.rbtn.on { background: #5f6062; border: 1px solid #555; }
.helpbtn { width: 39px; height: 20px; margin-left: 14px; border-radius: 2px; background: linear-gradient(#fff, #d0d0d0); display: flex; align-items: center; justify-content: center; flex: none; }
.helpdot { width: 15px; height: 15px; border-radius: 50%; background: #2c2c2c; color: #fff; font: 700 12px/15px "Liberation Sans", sans-serif; text-align: center; }
.docbar { height: 22px; background: #424242; border-bottom: 1px solid #7a7a7a; display: flex; align-items: flex-end; padding-right: 1px; flex: none; }
.doctab { width: 97px; height: 19px; background: #5e5e5e; color: #8e8e8e; display: flex; align-items: center; justify-content: space-between; padding: 0 7px 0 3px; margin-right: 3px; font-size: 10.500px; white-space: nowrap; overflow: hidden; flex: none; }
.doctab.on { background: linear-gradient(#7f7f7f, #6d6d6d); color: #d6d6d6; }
.dtxt { overflow: hidden; }
.ddot { width: 6px; height: 6px; border-radius: 50%; background: #2b2b2b; flex: none; margin-left: 3px; }
.sbbtn { width: 12px; height: 10px; background: #6f6f6f; border: 1px solid #8a8a8a; border-radius: 2px; display: flex; align-items: center; justify-content: center; flex: none; }
.sbbtn.tallb { height: 19px; margin-bottom: 1px; }
.c8d { width: 6px; height: 3px; }
.c8u { width: 6px; height: 3px; transform: rotate(180deg); }
.viewrow { flex: 1; display: flex; min-height: 0; }
.view { flex: 1; position: relative; min-width: 0; background: #424242; }
.vscroll { width: 12px; margin-right: 1px; background: #6a6a6a; display: flex; flex-direction: column; padding-top: 2px; flex: none; }
.statusrow { height: 12px; background: #5d5d5d; display: flex; align-items: center; padding-left: 3px; flex: none; }
.slider.stw { width: 98px; height: 12px; font-size: 11px; line-height: 14px; overflow: hidden; }
.slider.sth { padding-left: 4px; margin-left: 5px; }
.i14s { width: 12px; height: 12px; margin-left: 8px; flex: none; }
.i14s.near { margin-left: 2px; }
.hsb { flex: 1; height: 12px; display: flex; margin-left: 2px; background: #696969; border-bottom: 2px solid #8a8a8a; min-width: 0; }
.hb { width: 10px; height: 11px; background: #6f6f6f; border: 1px solid #8a8a8a; flex: none; }
.hgap1 { width: 331px; flex: none; }
.hthumb { width: 439px; height: 10px; background: linear-gradient(#7e7e7e, #686868); flex: none; }
.corner { width: 13px; height: 12px; background: #77787b; flex: none; }
.timeline { height: 41px; flex: none; background: #5c5c5c; border-top: 1px solid #3c3c3c; display: flex; align-items: center; padding-left: 1px; gap: 4px; }
.tlarrows { width: 18px; height: 100%; background: linear-gradient(#4e4e4e, #6c6c6c 50%, #4e4e4e); display: flex; flex-direction: column; justify-content: space-between; align-items: center; padding: 5px 0; margin-right: -1px; }
.c12 { width: 12px; height: 6px; opacity: .55; }
.tlbtn { width: 40px; height: 34px; background: #6e6f72; border: 1px solid #3c3c3c; display: flex; align-items: center; justify-content: center; flex: none; }
.tli { width: 24px; height: 18px; }

.rail { background: #5f5f5f; border-left: 1px solid #3e3e3e; padding-top: 3px; }
.railbtn { display: flex; align-items: center; justify-content: center; height: 19px; background: #6f6f6f; }

/* SAI window */
.sai { position: absolute; left: 19px; top: 100px; width: 1394px; height: 753px; background: #f8f8f8; border: 1px solid #8a8a8a; border-top: none; display: flex; flex-direction: column; font-family: "Noto Sans", Roboto, sans-serif; font-size: 8.500px; color: #444; }
.sai-title { height: 17px; background: #2e2e2e; display: flex; align-items: center; padding: 0 2px; color: #f2f2f2; font: 700 9.500px "Liberation Sans", sans-serif; gap: 1px; flex: none; margin: 0 -1px; }
.sai-ico { width: 11px; height: 10px; background: linear-gradient(90deg, #ddd, #3b8f60); border: 1px solid #ccc; margin-right: 3px; }
.sai-tt { flex: 1; letter-spacing: .2px; }
.sw { width: 12px; height: 12px; display: flex; align-items: center; justify-content: center; font-size: 9px; color: #fff; margin-left: 2px; }
.sw-g { background: #7a7a7a; }
.sw-r { background: #c00040; }
.smin { width: 5px; height: 1.500px; background: #fff; margin-top: 5px; }
.srest { width: 6px; height: 6px; border: 1px solid #ddd; }
.sai-menu { height: 17px; border-bottom: 1px solid #d8d8d8; display: flex; align-items: center; padding-left: 10px; color: #333; font-size: 9px; flex: none; }
.sm u { text-decoration: underline; }
.s1 { width: 30px; } .s2 { width: 33px; } .s3 { width: 44px; } .s4 { width: 39px; } .s5 { width: 53px; } .s6 { width: 37px; } .s7 { width: 37px; } .s8 { width: 36px; } .s9 { width: 51px; }
.sai-body { flex: 1; display: flex; min-height: 0; }
.dis { color: #c4c4c4; }
.nw { white-space: nowrap; flex: none; }
.dbtn { background: #e4e4e4; border: 1px solid #eee; border-radius: 1px; width: 14px; height: 14px; flex: none; display: flex; align-items: center; justify-content: center; }
.dbtn.tiny { width: 11px; height: 11px; background: #dcdcdc; }
.dbtn.t15 { width: 15px; height: 15px; margin-right: 2px; }
.dbtn.t15.gap5 { margin-left: 3px; }
.dbtn.t14 { width: 14px; height: 14px; margin-left: 1px; }
.dbtn.sqdot { background: #d8d8d8; }
.c6 { width: 5px; height: 3px; }

.sai-left { width: 184px; padding: 3px 1px 18px 2px; flex: none; display: flex; flex-direction: column; border-right: 1px solid #e4e4e4; }
.sl-preview { height: 122px; background: #bcbcbc; border: 1px solid #e0e0e0; flex: none; }
.sl-slider { display: flex; height: 16px; margin-top: 3px; gap: 1px; padding-left: 2px; align-items: center; flex: none; }
.sl-slider + .sl-slider { margin-top: 1px; }
.sl-track { width: 129px; margin-right: 3px; height: 15px; display: flex; flex-direction: column; font-size: 8px; line-height: 9px; }
.sl-line { height: 1px; background: #d0d0d0; margin-top: 2px; flex: none; }
.sl-tri { width: 0; height: 0; margin-left: 60px; border: 3px solid transparent; border-bottom: 4px solid #d0d0d0; border-top: none; flex: none; }
.divider { height: 6px; margin-top: 2px; border-bottom: 1px solid #e4e4e4; display: flex; justify-content: center; flex: none; }
.dgrip { width: 12px; height: 3px; background: #a0a0a0; border-radius: 2px; margin-top: 3px; }
.sl-head { height: 14px; display: flex; align-items: center; color: #8a5037; font-size: 9px; gap: 2px; flex: none; }
.tri-d { width: 0; height: 0; border: 3px solid transparent; border-top: 4px solid #8a3a10; border-bottom: none; }
.frow { display: flex; align-items: center; height: 10px; margin: 2px 0 1px 5px; flex: none; }
.frow.r14 { height: 13px; margin-top: 0; }
.frow.mt6 { margin-top: 5px; }
.frow.mtw { margin-top: 1px; }
.frow.mt3 { margin-top: 3px; height: 11px; }
.lab { width: 37px; flex: none; }
.lab2 { width: 28px; margin-left: -3px; }
.fld { height: 100%; background: #fff; border: 1px solid #e6e6e6; display: flex; align-items: center; justify-content: flex-end; padding-right: 3px; flex: none; }
.fld.long { width: 134px; padding-right: 0; }
.fld.mid { width: 108px; }
.fld.grow { width: 143px; padding-right: 0; }
.frow .fld.dis { padding-right: 3px; }
.barl { background: linear-gradient(90deg, #ddd 0 2px, #fff 2px); }
.barl.w2 { background: linear-gradient(90deg, #ddd 0 6px, #fff 6px); }
.ddb { width: 11px; height: 100%; background: #d2d2d2; display: flex; align-items: center; justify-content: center; flex: none; margin-left: auto; }
.ddb.dark { background: #8c8c8c; }
.chkrow { display: flex; align-items: center; gap: 2px; height: 13px; margin: 2px 0 0 5px; flex: none; }
.chkrow.tight { margin: 8px 0 0 2px; }
.cb { width: 11px; height: 11px; background: #fff; border: 1px solid #b0b0b0; flex: none; display: flex; align-items: center; justify-content: center; font-size: 9px; font-weight: 700; color: #111; line-height: 1; }
.cb.round { border-radius: 50%; width: 11px; height: 11px; }
.dimcb { border-color: #e0e0e0; }
.rg6 { margin-left: 6px; }
.hline { height: 1px; background: #e8e8e8; margin: 4px 0 5px; flex: none; }
.frow.lockrow { height: 12px; margin-top: 1px; margin-bottom: 0; gap: 3px; }
.g12 { width: 12px; height: 12px; flex: none; }
.m36 { margin-left: 9px; }
.sl-layers { flex: 1; display: flex; flex-direction: column; margin-top: 0; padding-top: 2px; border: 1px solid #ececec; min-height: 0; }
.gh-row { display: flex; height: 17px; align-items: center; padding: 0 3px 0 9px; gap: 3px; flex: none; }
.g14 { width: 14px; height: 14px; flex: none; }
.m20 { margin-left: 16px; }
.sl-listrow { flex: 1; display: flex; min-height: 0; margin-top: 1px; }
.sl-list { width: 166px; background: #c0c0c0; flex: none; }
.sl-sb { flex: 1; display: flex; flex-direction: column; align-items: center; background: #f2f2f2; }
.sl-bot { height: 12px; display: flex; padding: 1px 1px 0 1px; flex: none; }

.sai-mid { width: 153px; padding: 3px 4px 0 3px; flex: none; display: flex; flex-direction: column; color: #3e3e3e; }
.wtabs { display: flex; gap: 1px; height: 15px; flex: none; padding-left: 1px; }
.wt { width: 16px; height: 15px; background: #fff; border: 1px solid #eaeaea; display: flex; align-items: center; justify-content: center; border-radius: 1px; flex: none; }
.wt.sel { background: #e6e6fa; border-color: #b4b4f0; }
.wtring { width: 11px; height: 11px; border-radius: 50%; background: radial-gradient(circle, #e6e6fa 0 3px, transparent 3.500px), conic-gradient(#ff0, #0f0, #0ff, #00f, #f0f, #f00, #ff0); }
.bars { display: block; width: 11px; height: 8px; }
.b1 { background: repeating-linear-gradient(#111 0 2px, #fff 2px 3px); }
.b2 { background: repeating-linear-gradient(90deg, #111 0 6px, #555 6px 11px); height: 6px; }
.b3 { background: repeating-linear-gradient(#666 0 1px, #ddd 1px 2px); }
.b4 { background: repeating-linear-gradient(90deg, #c33 0 2px, #38c 2px 4px, #838 4px 6px); }
.b5 { width: 8px; height: 6px; border-radius: 50%; background: #444; }
.swheelwrap { height: 122px; display: flex; align-items: center; justify-content: center; flex: none; }
.swheel { width: 118px; height: 118px; border-radius: 50%; background: radial-gradient(circle, #f8f8f8 0 45.500px, #ccc 46px 47px, transparent 47.500px), conic-gradient(#ff0 0deg, #0f0 60deg, #0ff 120deg, #00f 180deg, #f0f 240deg, #f00 300deg, #ff0 360deg); box-shadow: 0 0 0 1px #ccc; position: relative; }
.swsq { position: absolute; left: 27.500px; top: 27.500px; width: 63px; height: 63px; background: linear-gradient(#0000 0%, #000 100%), linear-gradient(90deg, #fff, #f00); border: 1px solid #ccc; }
.cy { position: absolute; width: 7px; height: 7px; border-radius: 50%; border: 2px solid #20b8c8; }
.cy1 { left: 10px; top: 27px; }
.cy2 { left: 51px; top: 10px; }
.spalrow { display: flex; height: 87px; margin-top: 5px; flex: none; border: 1px solid #d8d8d8; }
.spalwrap { width: 132px; height: 85px; background: repeating-conic-gradient(#e8e8e8 0 25%, #f8f8f8 0 50%) 0 0 / 11px 11px; flex: none; }
.spal { width: 132px; height: 85px; }
.ssb { width: 12px; display: flex; flex-direction: column; background: #f4f4f4; flex: none; }
.sbb { width: 11px; height: 11px; background: #8e8e8e; margin: 1px 0 1px 1px; border-radius: 1px; flex: none; display: flex; align-items: center; justify-content: center; }
.sbt { width: 11px; background: #9a9a9a; margin: 1px 0 1px 1px; flex: none; }
.st1 { height: 20px; }
.st2 { height: 8px; }
.gripline { height: 6px; display: flex; justify-content: center; flex: none; }
.gripline .dgrip { margin-top: 2px; }
.stools { display: flex; height: 38px; flex: none; }
.stoolgrid { display: grid; grid-template-columns: repeat(5, 19px); grid-auto-rows: 19px; width: 95px; flex: none; }
.st { width: 18px; height: 18px; border: 1px solid #ececec; background: #fafafa; display: flex; align-items: center; justify-content: center; }
.st svg { width: 13px; height: 13px; }
.st.on { background: #e6e6fa; border-color: #b4b4f0; }
.stT { font: 700 15px "Liberation Serif", serif; color: #222; }
.scolors { width: 42px; margin-left: 13px; display: flex; flex-wrap: wrap; flex: none; }
.scfg { width: 22px; height: 21px; background: #c60000; border: 2px solid #d8d8d8; flex: none; }
.scarrow { width: 10px; height: 11px; margin: 2px 0 0 4px; }
.scbottom { display: flex; width: 100%; margin-top: -5px; align-items: flex-end; }
.scsmall { width: 8px; height: 8px; background: #e8e8e8; border: 1px solid #ccc; margin: 0 6px 3px 5px; }
.scbg { width: 22px; height: 22px; background: #fff0ee; border: 1px solid #ddd; }
.sbrushrow { display: flex; height: 72px; margin-top: 1px; border: 1px solid #d8d8d8; flex: none; }
.sbrushes { width: 132px; overflow: hidden; display: grid; grid-template-columns: repeat(4, 33px); grid-template-rows: 14px 25px 26px 5px; flex: none; background: #eee; }
.bc { background: #fff; border-right: 1px solid #e4e4e4; border-bottom: 1px solid #e4e4e4; font-size: 7.500px; line-height: 9px; padding: 1px 0 0 2px; display: flex; flex-wrap: wrap; overflow: hidden; color: #444; align-content: flex-start; white-space: nowrap; }
.bc.c14 { flex-wrap: nowrap; padding-left: 1px; }
.bc.em { background: #ececec; }
.bc.cut { line-height: 7px; padding-top: 0; border-bottom: none; }
.bl { width: 100%; }
.bp { width: 13px; height: 13px; margin-left: auto; margin-right: 1px; }
.bc.c14 .bp { margin-left: -3px; margin-top: -1px; }
.gripline.gl { height: 5px; }
.gripline.gl .dgrip { margin-top: 1px; }
.opt { display: flex; align-items: center; gap: 2px; height: 13px; padding-left: 1px; font-size: 8.500px; flex: none; white-space: nowrap; }
.opt .cb.on { box-shadow: inset 0 0 0 1px #fff; border-color: #999; }
.sep { height: 1px; background: #e2e2e2; margin: 1px 0 1px; flex: none; }
.otext { height: 12px; line-height: 12px; flex: none; padding-left: 1px; }
.dd { display: flex; height: 12px; margin-top: 2px; align-items: center; flex: none; }
.dd.tdd { margin-top: 1px; }
.ddl { width: 66px; text-align: right; padding-right: 1px; flex: none; }
.ddf { width: 76px; height: 12px; background: #fff; border: 1px solid #ccc; display: flex; justify-content: space-between; align-items: center; padding-right: 2px; margin-left: 1px; flex: none; }
.ddfill { width: 24px; height: 100%; background: #bcbcbc; }
.sep.se7 { margin: 7px 0 2px; }
.opt.r13 { height: 13px; }
.okrow { display: flex; gap: 3px; margin: 1px 0 0 1px; height: 14px; flex: none; }
.okb { width: 69px; background: #c8c8c8; color: #eee; font-weight: 700; text-align: center; line-height: 14px; }
.sep.se1 { margin: 7px 0 2px; }
.perspective { display: flex; align-items: center; height: 13px; justify-content: space-between; padding-left: 1px; flex: none; }
.pf { width: 93px; height: 12px; background: #fff; border: 1px solid #ccc; text-align: right; padding-right: 2px; line-height: 10px; }
.sep.se2 { margin: 6px 0 2px; }
.actb { height: 13px; background: #8c8c8c; color: #f0f0f0; font-weight: 700; font-size: 8.800px; text-align: center; line-height: 12px; margin: 0 0 3px 1px; border: 1px solid #777; flex: none; }
.sep.se3 { margin: 2px 0 3px; }
.rs { display: flex; height: 13px; margin-top: 3px; align-items: center; flex: none; }
.otext + .rs { margin-top: 2px; }
.rsl { width: 45px; text-align: right; padding-right: 2px; flex: none; }
.rsf { width: 97px; height: 13px; background: #fff; border: 1px solid #ccc; display: flex; align-items: center; padding-left: 2px; flex: none; }
.sep.se4 { margin: 6px 0 2px; }

.sai-vbar { width: 12px; display: flex; flex-direction: column; align-items: center; padding: 4px 0 19px; background: #f0f0f0; flex: none; }

.sai-right { flex: 1; display: flex; flex-direction: column; min-width: 0; padding: 3px 2px 0 0; }
.sai-tb { display: flex; align-items: center; height: 15px; flex: none; }
.cb.wide { width: 14px; height: 14px; margin-left: 1px; }
.tbsel { margin: 0 3px 0 2px; width: 36px; }
.tbcombo { width: 47px; height: 14px; background: #fff; border: 1px solid #ececec; display: flex; flex: none; margin-right: 2px; }
.tbcombo.gap5 { margin-left: 5px; }
.swap { width: 11px; height: 9px; margin: 0 8px 0 12px; }
.stab { font-size: 8.500px; color: #333; width: 36px; flex: none; white-space: nowrap; }
.stabf { width: 32px; height: 14px; background: #fff; border: 1px solid #bbb; display: flex; align-items: center; padding-left: 2px; margin-left: 1px; flex: none; }
.penbtn { width: 14px; height: 14px; margin-left: 6px; border: 1px solid #ececec; display: flex; align-items: center; justify-content: center; flex: none; }
.sai-canvas { height: 681px; margin-top: 2px; background: #c0c0c0; border: 1px solid #dcdcdc; flex: none; }
```
